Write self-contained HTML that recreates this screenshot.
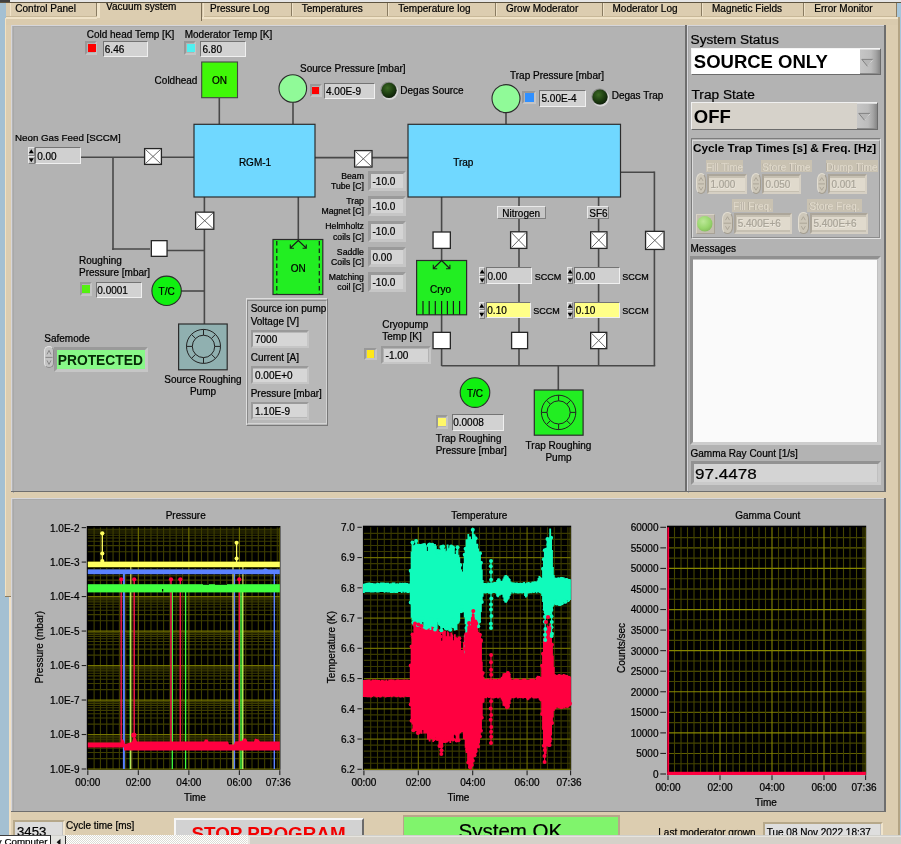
<!DOCTYPE html>
<html><head><meta charset="utf-8"><title>Vacuum system</title>
<style>
html,body{margin:0;padding:0;}
body{width:901px;height:844px;overflow:hidden;position:relative;background:#dccdb0;font-family:"Liberation Sans", sans-serif;}
#root{position:absolute;left:-6px;top:-6px;width:913px;height:856px;overflow:visible;filter:blur(0.4px);}
#in{left:6px;top:6px;width:901px;height:844px;overflow:visible;will-change:transform;}
#root div{position:absolute;}
#root span{position:absolute;white-space:nowrap;line-height:1;-webkit-text-stroke:0.22px;}
</style></head><body><div id="root"><div id="in">
<div style="left:-6px;top:-6px;width:913px;height:856px;background:#dccdb0;"></div>
<div style="left:-6px;top:1.5px;width:12px;height:16px;background:#a4c0d2;"></div>
<div style="left:-6px;top:17px;width:10.7px;height:580px;background:#a4c0d2;"></div>
<div style="left:-6px;top:597px;width:15px;height:238px;background:#a4c0d2;"></div>
<div style="left:4.7px;top:17.5px;width:1.8px;height:579px;background:#f2e2c2;"></div>
<div style="left:9px;top:597px;width:2px;height:238px;background:#f0e0c4;"></div>
<div style="left:4.7px;top:595.5px;width:6px;height:1.5px;background:#8c7c60;"></div>
<div style="left:897.3px;top:3px;width:9.7px;height:14.5px;background:#a6c6da;"></div>
<div style="left:896px;top:3px;width:1.4px;height:14.5px;background:#a89878;"></div>
<div style="left:899.8px;top:17.3px;width:7.2px;height:818px;background:#a6c6da;"></div>
<div style="left:898.2px;top:17.3px;width:1.6px;height:818px;background:#b4a484;"></div>
<div style="left:6px;top:3px;width:891px;height:14.5px;background:#dccdb0;"></div>
<div style="left:6px;top:17.3px;width:891.5px;height:1.7px;background:#f0e3c8;"></div>
<div style="left:6px;top:19px;width:891.5px;height:5.7px;background:#dacbae;"></div>
<div style="left:95.7px;top:3px;width:1.3px;height:14px;background:#8a7c62;"></div>
<div style="left:10px;top:3px;width:1px;height:14px;background:#efe2c8;"></div>
<span style="top:4px;font-size:10px;color:#000;left:15.3px;">Control Panel</span>
<div style="left:97px;top:1px;width:105px;height:19px;background:#dccdb0;"></div>
<div style="left:97px;top:1px;width:2.6px;height:17px;background:#f0e4ca;"></div>
<div style="left:200.5px;top:1px;width:1.5px;height:19.5px;background:#7a6c54;"></div>
<span style="top:2px;font-size:10px;color:#000;left:106px;">Vacuum system</span>
<div style="left:290.7px;top:3px;width:1.3px;height:14px;background:#8a7c62;"></div>
<div style="left:202.5px;top:3px;width:1px;height:14px;background:#efe2c8;"></div>
<span style="top:4px;font-size:10px;color:#000;left:210px;">Pressure Log</span>
<div style="left:386.7px;top:3px;width:1.3px;height:14px;background:#8a7c62;"></div>
<div style="left:292px;top:3px;width:1px;height:14px;background:#efe2c8;"></div>
<span style="top:4px;font-size:10px;color:#000;left:301.7px;">Temperatures</span>
<div style="left:494.7px;top:3px;width:1.3px;height:14px;background:#8a7c62;"></div>
<div style="left:388px;top:3px;width:1px;height:14px;background:#efe2c8;"></div>
<span style="top:4px;font-size:10px;color:#000;left:398.3px;">Temperature log</span>
<div style="left:601.7px;top:3px;width:1.3px;height:14px;background:#8a7c62;"></div>
<div style="left:496px;top:3px;width:1px;height:14px;background:#efe2c8;"></div>
<span style="top:4px;font-size:10px;color:#000;left:506px;">Grow Moderator</span>
<div style="left:700.7px;top:3px;width:1.3px;height:14px;background:#8a7c62;"></div>
<div style="left:603px;top:3px;width:1px;height:14px;background:#efe2c8;"></div>
<span style="top:4px;font-size:10px;color:#000;left:612.5px;">Moderator Log</span>
<div style="left:802.7px;top:3px;width:1.3px;height:14px;background:#8a7c62;"></div>
<div style="left:702px;top:3px;width:1px;height:14px;background:#efe2c8;"></div>
<span style="top:4px;font-size:10px;color:#000;left:712px;">Magnetic Fields</span>
<div style="left:895.7px;top:3px;width:1.3px;height:14px;background:#8a7c62;"></div>
<div style="left:804px;top:3px;width:1px;height:14px;background:#efe2c8;"></div>
<span style="top:4px;font-size:10px;color:#000;left:814.3px;">Error Monitor</span>
<div style="left:6px;top:16.3px;width:91px;height:1px;background:#c8b898;"></div>
<div style="left:203.5px;top:16.3px;width:692.5px;height:1px;background:#c8b898;"></div>
<div style="left:-6px;top:-6px;width:913px;height:8px;background:#e6e6e6;"></div>
<div style="left:-6px;top:1.9px;width:913px;height:1.4px;background:#5e5440;"></div>
<div style="left:-6px;top:-6px;width:16px;height:7.6px;background:#404040;"></div>
<div style="left:11.2px;top:24.7px;width:675.5px;height:467.8px;background:#b3b3b3;"></div>
<div style="left:11.2px;top:24.7px;width:675.5px;height:1.3px;background:#d6d6da;"></div>
<div style="left:11.2px;top:24.7px;width:1.3px;height:467.8px;background:#d6d6da;"></div>
<div style="left:12.5px;top:26.0px;width:674.2px;height:1px;background:#a9a9a9;"></div>
<div style="left:12.5px;top:26.0px;width:1px;height:466.5px;background:#a9a9a9;"></div>
<div style="left:11.2px;top:490.6px;width:675.5px;height:1.9px;background:#6e6e6e;"></div>
<div style="left:684.8000000000001px;top:24.7px;width:1.9px;height:467.8px;background:#6e6e6e;"></div>
<div style="left:686.7px;top:24.7px;width:199.1px;height:467.8px;background:#b3b3b3;"></div>
<div style="left:686.7px;top:24.7px;width:199.1px;height:1.3px;background:#d6d6da;"></div>
<div style="left:686.7px;top:24.7px;width:1.3px;height:467.8px;background:#d6d6da;"></div>
<div style="left:688.0px;top:26.0px;width:197.79999999999998px;height:1px;background:#a9a9a9;"></div>
<div style="left:688.0px;top:26.0px;width:1px;height:466.5px;background:#a9a9a9;"></div>
<div style="left:686.7px;top:490.6px;width:199.1px;height:1.9px;background:#6e6e6e;"></div>
<div style="left:883.9000000000001px;top:24.7px;width:1.9px;height:467.8px;background:#6e6e6e;"></div>
<div style="left:11.2px;top:498px;width:874.6px;height:314.4px;background:#b3b3b3;"></div>
<div style="left:11.2px;top:498px;width:874.6px;height:1.3px;background:#d6d6da;"></div>
<div style="left:11.2px;top:498px;width:1.3px;height:314.4px;background:#d6d6da;"></div>
<div style="left:12.5px;top:499.3px;width:873.3000000000001px;height:1px;background:#a9a9a9;"></div>
<div style="left:12.5px;top:499.3px;width:1px;height:313.09999999999997px;background:#a9a9a9;"></div>
<div style="left:11.2px;top:810.5px;width:874.6px;height:1.9px;background:#6e6e6e;"></div>
<div style="left:883.9000000000001px;top:498px;width:1.9px;height:314.4px;background:#6e6e6e;"></div>
<svg width="901" height="844" viewBox="0 0 901 844" style="position:absolute;left:0;top:0"><defs><radialGradient id="ledg" cx="0.4" cy="0.35" r="0.7"><stop offset="0" stop-color="#3c6a24"/><stop offset="0.6" stop-color="#1c3c10"/><stop offset="1" stop-color="#0c1c08"/></radialGradient><radialGradient id="ledon" cx="0.4" cy="0.35" r="0.7"><stop offset="0" stop-color="#bce898"/><stop offset="0.65" stop-color="#98d66c"/><stop offset="1" stop-color="#84bc5c"/></radialGradient></defs><line x1="81" y1="157.3" x2="194" y2="157.3" stroke="#484848" stroke-width="1.6"/><line x1="113" y1="157.3" x2="113" y2="250" stroke="#484848" stroke-width="1.6"/><line x1="112.2" y1="249" x2="150" y2="249" stroke="#484848" stroke-width="1.6"/><line x1="167" y1="250.5" x2="204.4" y2="250.5" stroke="#484848" stroke-width="1.6"/><line x1="204.4" y1="197" x2="204.4" y2="324" stroke="#484848" stroke-width="1.6"/><line x1="181" y1="291" x2="204.4" y2="291" stroke="#484848" stroke-width="1.6"/><line x1="219.3" y1="98" x2="219.3" y2="124" stroke="#484848" stroke-width="1.6"/><line x1="293" y1="101" x2="293" y2="124" stroke="#484848" stroke-width="1.6"/><line x1="298.3" y1="197" x2="298.3" y2="240" stroke="#484848" stroke-width="1.6"/><line x1="315" y1="157.6" x2="408" y2="157.6" stroke="#484848" stroke-width="1.6"/><line x1="506" y1="112" x2="506" y2="124" stroke="#484848" stroke-width="1.6"/><line x1="441.6" y1="197" x2="441.6" y2="366" stroke="#484848" stroke-width="1.6"/><line x1="519" y1="197" x2="519" y2="366" stroke="#484848" stroke-width="1.6"/><line x1="598.6" y1="197" x2="598.6" y2="366" stroke="#484848" stroke-width="1.6"/><line x1="620" y1="172.3" x2="654.4" y2="172.3" stroke="#484848" stroke-width="1.6"/><line x1="654.4" y1="171.5" x2="654.4" y2="366" stroke="#484848" stroke-width="1.6"/><line x1="441.6" y1="365.7" x2="655.2" y2="365.7" stroke="#484848" stroke-width="1.6"/><line x1="558.3" y1="365.7" x2="558.3" y2="390" stroke="#484848" stroke-width="1.6"/><rect x="194" y="124.3" width="121" height="72.7" fill="#70d8ff" stroke="#2c2c2c" stroke-width="1.2"/><rect x="408" y="124.3" width="212.5" height="72.7" fill="#70d8ff" stroke="#2c2c2c" stroke-width="1.2"/><rect x="201.7" y="62" width="35.8" height="35.7" fill="#40f808" stroke="#444" stroke-width="1.1"/><rect x="273" y="239.5" width="49.8" height="55" fill="#22ee22" stroke="#2c2c2c" stroke-width="1.2"/><path d="M276.8,241 V294 M319.3,241 V294" stroke="#1a1a1a" stroke-width="1.2" stroke-dasharray="4.5,3" fill="none"/><path d="M298.3,240.5 L291,247.5 M298.3,240.5 L305.6,247.5 M290.3,244.5 V248.2 H294 M306.3,244.5 V248.2 H302.6" stroke="#1a1a1a" stroke-width="1.1" fill="none"/><rect x="416.6" y="260.5" width="50" height="54.3" fill="#22ee22" stroke="#2c2c2c" stroke-width="1.2"/><path d="M441.6,260.5 L434,268 M441.6,260.5 L449.2,268 M433.3,264.8 V268.7 H437.2 M449.9,264.8 V268.7 H446" stroke="#1a1a1a" stroke-width="1.1" fill="none"/><path d="M423,301 V314.5 M429.2,301 V314.5 M435.3,301 V314.5 M441.6,301 V314.5 M447.4,301 V314.5 M453.4,301 V314.5 M459.6,301 V314.5 " stroke="#1a1a1a" stroke-width="1.2" fill="none"/><rect x="144.6" y="148.6" width="16.8" height="15.8" fill="#ffffff" stroke="#262626" stroke-width="1.3"/><path d="M145.4,149.4 L160.6,163.6 M160.6,149.4 L145.4,163.6" stroke="#585858" stroke-width="0.9" fill="none"/><rect x="195.6" y="212.14999999999998" width="18.2" height="17.099999999999998" fill="#ffffff" stroke="#262626" stroke-width="1.3"/><path d="M196.4,212.95 L212.99999999999997,228.44999999999996 M212.99999999999997,212.95 L196.4,228.44999999999996" stroke="#585858" stroke-width="0.9" fill="none"/><rect x="151.35" y="240.65" width="15.7" height="15.7" fill="#ffffff" stroke="#262626" stroke-width="1.3"/><rect x="354.6" y="150.60000000000002" width="17.4" height="16.4" fill="#ffffff" stroke="#262626" stroke-width="1.3"/><path d="M355.40000000000003,151.40000000000003 L371.2,166.20000000000002 M371.2,151.40000000000003 L355.40000000000003,166.20000000000002" stroke="#585858" stroke-width="0.9" fill="none"/><rect x="433.05" y="232.0" width="17.3" height="16.4" fill="#ffffff" stroke="#262626" stroke-width="1.3"/><rect x="510.6" y="231.79999999999998" width="16.2" height="16.599999999999998" fill="#ffffff" stroke="#262626" stroke-width="1.3"/><path d="M511.40000000000003,232.6 L526.0000000000001,247.59999999999997 M526.0000000000001,232.6 L511.40000000000003,247.59999999999997" stroke="#585858" stroke-width="0.9" fill="none"/><rect x="590.65" y="231.79999999999998" width="16.3" height="16.599999999999998" fill="#ffffff" stroke="#262626" stroke-width="1.3"/><path d="M591.4499999999999,232.6 L606.15,247.59999999999997 M606.15,232.6 L591.4499999999999,247.59999999999997" stroke="#585858" stroke-width="0.9" fill="none"/><rect x="645.55" y="231.35" width="18.5" height="18.099999999999998" fill="#ffffff" stroke="#262626" stroke-width="1.3"/><path d="M646.3499999999999,232.15 L663.25,248.64999999999998 M663.25,232.15 L646.3499999999999,248.64999999999998" stroke="#585858" stroke-width="0.9" fill="none"/><rect x="433.05" y="332.35" width="17.3" height="16.3" fill="#ffffff" stroke="#262626" stroke-width="1.3"/><rect x="511.6" y="332.35" width="16.0" height="16.3" fill="#ffffff" stroke="#262626" stroke-width="1.3"/><rect x="590.6500000000001" y="332.35" width="16.099999999999998" height="16.3" fill="#ffffff" stroke="#262626" stroke-width="1.3"/><path d="M591.45,333.15000000000003 L605.9500000000002,347.85 M605.9500000000002,333.15000000000003 L591.45,347.85" stroke="#585858" stroke-width="0.9" fill="none"/><circle cx="292.8" cy="88.5" r="13.8" fill="#90fa98" stroke="#2c2c2c" stroke-width="1.1"/><circle cx="506" cy="98.6" r="14" fill="#90fa98" stroke="#2c2c2c" stroke-width="1.1"/><circle cx="166.6" cy="290.8" r="14.7" fill="#10f010" stroke="#2c2c2c" stroke-width="1.1"/><circle cx="475" cy="392.6" r="14.8" fill="#10f010" stroke="#2c2c2c" stroke-width="1.1"/><rect x="178.6" y="324" width="48.6" height="45.8" fill="#90b0b0" stroke="#2c2c2c" stroke-width="1.2"/><circle cx="203.5" cy="346.4" r="17" fill="none" stroke="#222" stroke-width="1"/><circle cx="203.5" cy="346.4" r="11.2" fill="none" stroke="#222" stroke-width="1"/><path d="M214.70,346.40 L220.50,346.40 M211.42,354.32 L215.52,358.42 M203.50,357.60 L203.50,363.40 M195.58,354.32 L191.48,358.42 M192.30,346.40 L186.50,346.40 M195.58,338.48 L191.48,334.38 M203.50,335.20 L203.50,329.40 M211.42,338.48 L215.52,334.38 " stroke="#222" stroke-width="1" fill="none"/><rect x="534.3" y="390" width="48.8" height="45.2" fill="#22ee22" stroke="#2c2c2c" stroke-width="1.2"/><circle cx="558.6" cy="412.4" r="17.2" fill="none" stroke="#222" stroke-width="1"/><circle cx="558.6" cy="412.4" r="11.6" fill="none" stroke="#222" stroke-width="1"/><path d="M570.20,412.40 L575.80,412.40 M566.80,420.60 L570.76,424.56 M558.60,424.00 L558.60,429.60 M550.40,420.60 L546.44,424.56 M547.00,412.40 L541.40,412.40 M550.40,404.20 L546.44,400.24 M558.60,400.80 L558.60,395.20 M566.80,404.20 L570.76,400.24 " stroke="#222" stroke-width="1" fill="none"/><circle cx="389.6" cy="91.1" r="8.6" fill="#d8d8d8"/><circle cx="388.6" cy="89.89999999999999" r="8.2" fill="#8a8a8a"/><circle cx="389" cy="90.3" r="7.6" fill="url(#ledg)"/><circle cx="600.6" cy="97.8" r="8.6" fill="#d8d8d8"/><circle cx="599.6" cy="96.6" r="8.2" fill="#8a8a8a"/><circle cx="600" cy="97" r="7.6" fill="url(#ledg)"/></svg>
<span style="top:158px;font-size:10px;color:#000;left:255px;transform:translateX(-50%);">RGM-1</span>
<span style="top:158px;font-size:10px;color:#000;left:463.3px;transform:translateX(-50%);">Trap</span>
<span style="top:76px;font-size:10px;color:#000;left:219.5px;transform:translateX(-50%);">ON</span>
<span style="top:264px;font-size:10px;color:#000;left:298.3px;transform:translateX(-50%);">ON</span>
<span style="top:285px;font-size:10px;color:#000;left:440.5px;transform:translateX(-50%);">Cryo</span>
<span style="top:287px;font-size:10px;color:#000;left:166.6px;transform:translateX(-50%);">T/C</span>
<span style="top:389px;font-size:10px;color:#000;left:475px;transform:translateX(-50%);">T/C</span>
<span style="top:76px;font-size:10px;color:#000;right:703.6px;">Coldhead</span>
<span style="top:30px;font-size:10px;color:#000;left:86.7px;">Cold head Temp [K]</span>
<span style="top:30px;font-size:10px;color:#000;left:184.7px;">Moderator Temp [K]</span>
<span style="top:64px;font-size:10px;color:#000;left:300px;">Source Pressure [mbar]</span>
<span style="top:86px;font-size:10px;color:#000;left:400.3px;">Degas Source</span>
<span style="top:71px;font-size:10px;color:#000;left:510px;">Trap Pressure [mbar]</span>
<span style="top:91px;font-size:10px;color:#000;left:611.7px;">Degas Trap</span>
<span style="top:133px;font-size:9.75px;color:#000;left:15px;">Neon Gas Feed [SCCM]</span>
<span style="top:256px;font-size:10px;color:#000;left:79px;">Roughing</span>
<span style="top:268px;font-size:10px;color:#000;left:79px;">Pressure [mbar]</span>
<span style="top:334px;font-size:10px;color:#000;left:44.3px;">Safemode</span>
<span style="top:375px;font-size:10px;color:#000;left:203px;transform:translateX(-50%);">Source Roughing</span>
<span style="top:387px;font-size:10px;color:#000;left:203px;transform:translateX(-50%);">Pump</span>
<span style="top:441px;font-size:10px;color:#000;left:558.5px;transform:translateX(-50%);">Trap Roughing</span>
<span style="top:453px;font-size:10px;color:#000;left:558.5px;transform:translateX(-50%);">Pump</span>
<span style="top:434px;font-size:10px;color:#000;left:435.7px;">Trap Roughing</span>
<span style="top:446px;font-size:10px;color:#000;left:435.7px;">Pressure [mbar]</span>
<span style="top:320px;font-size:10px;color:#000;left:382.3px;">Cryopump</span>
<span style="top:332px;font-size:10px;color:#000;left:382.3px;">Temp [K]</span>
<span style="top:172px;font-size:8.7px;color:#000;right:537.1px;">Beam</span>
<span style="top:182px;font-size:8.7px;color:#000;right:537.1px;">Tube [C]</span>
<div style="left:367.5px;top:170.6px;width:38px;height:20.6px;background:transparent;box-sizing:border-box;border:3px solid;border-color:#9a9a9a #c6c6c6 #c6c6c6 #9a9a9a;"></div>
<div style="left:370.5px;top:173.6px;width:32px;height:14.600000000000001px;background:#d4d4d4;"></div>
<span style="top:177px;font-size:10px;color:#000;left:372.5px;">-10.0</span>
<span style="top:197px;font-size:8.7px;color:#000;right:537.1px;">Trap</span>
<span style="top:207px;font-size:8.7px;color:#000;right:537.1px;">Magnet [C]</span>
<div style="left:367.5px;top:195.9px;width:38px;height:20.6px;background:transparent;box-sizing:border-box;border:3px solid;border-color:#9a9a9a #c6c6c6 #c6c6c6 #9a9a9a;"></div>
<div style="left:370.5px;top:198.9px;width:32px;height:14.600000000000001px;background:#d4d4d4;"></div>
<span style="top:202px;font-size:10px;color:#000;left:372.5px;">-10.0</span>
<span style="top:222px;font-size:8.7px;color:#000;right:537.1px;">Helmholtz</span>
<span style="top:233px;font-size:8.7px;color:#000;right:537.1px;">coils [C]</span>
<div style="left:367.5px;top:221.2px;width:38px;height:20.6px;background:transparent;box-sizing:border-box;border:3px solid;border-color:#9a9a9a #c6c6c6 #c6c6c6 #9a9a9a;"></div>
<div style="left:370.5px;top:224.2px;width:32px;height:14.600000000000001px;background:#d4d4d4;"></div>
<span style="top:227px;font-size:10px;color:#000;left:372.5px;">-10.0</span>
<span style="top:248px;font-size:8.7px;color:#000;right:537.1px;">Saddle</span>
<span style="top:258px;font-size:8.7px;color:#000;right:537.1px;">Coils [C]</span>
<div style="left:367.5px;top:246.5px;width:38px;height:20.6px;background:transparent;box-sizing:border-box;border:3px solid;border-color:#9a9a9a #c6c6c6 #c6c6c6 #9a9a9a;"></div>
<div style="left:370.5px;top:249.5px;width:32px;height:14.600000000000001px;background:#d4d4d4;"></div>
<span style="top:253px;font-size:10px;color:#000;left:372.5px;">0.00</span>
<span style="top:273px;font-size:8.7px;color:#000;right:537.1px;">Matching</span>
<span style="top:283px;font-size:8.7px;color:#000;right:537.1px;">coil [C]</span>
<div style="left:367.5px;top:271.8px;width:38px;height:20.6px;background:transparent;box-sizing:border-box;border:3px solid;border-color:#9a9a9a #c6c6c6 #c6c6c6 #9a9a9a;"></div>
<div style="left:370.5px;top:274.8px;width:32px;height:14.600000000000001px;background:#d4d4d4;"></div>
<span style="top:278px;font-size:10px;color:#000;left:372.5px;">-10.0</span>
<div style="left:85.3px;top:40.8px;width:12.2px;height:13.8px;background:transparent;box-sizing:border-box;border:2px solid;border-color:#989898 #c4c4c4 #c4c4c4 #989898;"></div>
<div style="left:88.3px;top:44px;width:8px;height:8px;background:#ff0000;"></div>
<div style="left:102.7px;top:40.8px;width:45.5px;height:16px;background:#d2d2d2;box-sizing:border-box;border:1.4px solid;border-color:#747474 #f0f0f0 #f0f0f0 #747474;"></div>
<span style="top:45px;font-size:10px;color:#000;left:104.8px;">6.46</span>
<div style="left:183.5px;top:40.8px;width:12.2px;height:13.8px;background:transparent;box-sizing:border-box;border:2px solid;border-color:#989898 #c4c4c4 #c4c4c4 #989898;"></div>
<div style="left:186.6px;top:44px;width:8px;height:8px;background:#50f0f0;"></div>
<div style="left:200.3px;top:40.8px;width:45.7px;height:16px;background:#d2d2d2;box-sizing:border-box;border:1.4px solid;border-color:#747474 #f0f0f0 #f0f0f0 #747474;"></div>
<span style="top:45px;font-size:10px;color:#000;left:202.5px;">6.80</span>
<div style="left:309.5px;top:84.3px;width:12px;height:12.5px;background:transparent;box-sizing:border-box;border:2px solid;border-color:#989898 #c4c4c4 #c4c4c4 #989898;"></div>
<div style="left:312.1px;top:86.89999999999999px;width:6.8px;height:7.3px;background:#ff0000;"></div>
<div style="left:324.3px;top:82.6px;width:50.3px;height:16.8px;background:#d2d2d2;box-sizing:border-box;border:1.4px solid;border-color:#747474 #f0f0f0 #f0f0f0 #747474;"></div>
<span style="top:87px;font-size:10px;color:#000;left:326px;">4.00E-9</span>
<div style="left:521.8px;top:91px;width:14px;height:13.4px;background:transparent;box-sizing:border-box;border:2px solid;border-color:#989898 #c4c4c4 #c4c4c4 #989898;"></div>
<div style="left:525.4px;top:93.3px;width:9px;height:9px;background:#3090ff;"></div>
<div style="left:539.4px;top:89.8px;width:46.4px;height:17px;background:#d2d2d2;box-sizing:border-box;border:1.4px solid;border-color:#747474 #f0f0f0 #f0f0f0 #747474;"></div>
<span style="top:94px;font-size:10px;color:#000;left:541.5px;">5.00E-4</span>
<div style="left:79.8px;top:282px;width:12.6px;height:13.6px;background:transparent;box-sizing:border-box;border:2px solid;border-color:#989898 #c4c4c4 #c4c4c4 #989898;"></div>
<div style="left:81.8px;top:284.7px;width:8px;height:8px;background:#54f010;"></div>
<div style="left:96.2px;top:282.2px;width:46px;height:16.2px;background:#d2d2d2;box-sizing:border-box;border:1.4px solid;border-color:#747474 #f0f0f0 #f0f0f0 #747474;"></div>
<span style="top:286px;font-size:10px;color:#000;left:97.3px;">0.0001</span>
<div style="left:435.5px;top:415.2px;width:12.8px;height:13.4px;background:transparent;box-sizing:border-box;border:2px solid;border-color:#989898 #c4c4c4 #c4c4c4 #989898;"></div>
<div style="left:438.1px;top:417.8px;width:7.6000000000000005px;height:8.2px;background:#fff868;"></div>
<div style="left:451.8px;top:414.2px;width:52.5px;height:16.6px;background:#d2d2d2;box-sizing:border-box;border:1.4px solid;border-color:#747474 #f0f0f0 #f0f0f0 #747474;"></div>
<span style="top:418px;font-size:10px;color:#000;left:453.2px;">0.0008</span>
<div style="left:364.3px;top:347.6px;width:12.6px;height:12.6px;background:transparent;box-sizing:border-box;border:2px solid;border-color:#989898 #c4c4c4 #c4c4c4 #989898;"></div>
<div style="left:366.90000000000003px;top:350.20000000000005px;width:7.3999999999999995px;height:7.3999999999999995px;background:#ffe818;"></div>
<div style="left:381px;top:346px;width:49.7px;height:18.4px;background:transparent;box-sizing:border-box;border:2.5px solid;border-color:#9a9a9a #c6c6c6 #c6c6c6 #9a9a9a;"></div>
<div style="left:383.5px;top:348.5px;width:44.7px;height:13.399999999999999px;background:#d4d4d4;"></div>
<span style="top:351px;font-size:10px;color:#000;left:385.6px;">-1.00</span>
<div style="left:28px;top:147.2px;width:6.6px;height:8.5px;background:#c4c4c4;box-sizing:border-box;border:1px solid;border-color:#e8e8e8 #808080 #808080 #e8e8e8;"></div>
<div style="left:28px;top:155.7px;width:6.6px;height:8.5px;background:#c4c4c4;box-sizing:border-box;border:1px solid;border-color:#e8e8e8 #808080 #808080 #e8e8e8;"></div>
<div style="left:35.2px;top:147.4px;width:45.4px;height:16.8px;background:#d0d0d0;box-sizing:border-box;border:1.4px solid;border-color:#747474 #f0f0f0 #f0f0f0 #747474;"></div>
<span style="top:152px;font-size:10px;color:#000;left:37.2px;">0.00</span>
<div style="left:479.3px;top:267.4px;width:5.8px;height:8.5px;background:#c4c4c4;box-sizing:border-box;border:1px solid;border-color:#e8e8e8 #808080 #808080 #e8e8e8;"></div>
<div style="left:479.3px;top:275.9px;width:5.8px;height:8.5px;background:#c4c4c4;box-sizing:border-box;border:1px solid;border-color:#e8e8e8 #808080 #808080 #e8e8e8;"></div>
<div style="left:486px;top:267.3px;width:45.7px;height:17px;background:#d0d0d0;box-sizing:border-box;border:1.4px solid;border-color:#747474 #f0f0f0 #f0f0f0 #747474;"></div>
<span style="top:272px;font-size:10px;color:#000;left:487.5px;">0.00</span>
<span style="top:273px;font-size:9px;color:#000;left:534.7px;">SCCM</span>
<div style="left:567.2px;top:267.4px;width:5.8px;height:8.5px;background:#c4c4c4;box-sizing:border-box;border:1px solid;border-color:#e8e8e8 #808080 #808080 #e8e8e8;"></div>
<div style="left:567.2px;top:275.9px;width:5.8px;height:8.5px;background:#c4c4c4;box-sizing:border-box;border:1px solid;border-color:#e8e8e8 #808080 #808080 #e8e8e8;"></div>
<div style="left:574.3px;top:267.3px;width:45.7px;height:17px;background:#d0d0d0;box-sizing:border-box;border:1.4px solid;border-color:#747474 #f0f0f0 #f0f0f0 #747474;"></div>
<span style="top:272px;font-size:10px;color:#000;left:575.8px;">0.00</span>
<span style="top:273px;font-size:9px;color:#000;left:622.3px;">SCCM</span>
<div style="left:478.8px;top:301.8px;width:5.8px;height:8.5px;background:#c4c4c4;box-sizing:border-box;border:1px solid;border-color:#e8e8e8 #808080 #808080 #e8e8e8;"></div>
<div style="left:478.8px;top:310.3px;width:5.8px;height:8.5px;background:#c4c4c4;box-sizing:border-box;border:1px solid;border-color:#e8e8e8 #808080 #808080 #e8e8e8;"></div>
<div style="left:485.8px;top:301.7px;width:45.3px;height:16.8px;background:#ffff88;box-sizing:border-box;border:1.4px solid;border-color:#747474 #f0f0f0 #f0f0f0 #747474;"></div>
<span style="top:306px;font-size:10px;color:#000;left:487.3px;">0.10</span>
<span style="top:307px;font-size:9px;color:#000;left:533.3px;">SCCM</span>
<div style="left:567.2px;top:301.8px;width:5.8px;height:8.5px;background:#c4c4c4;box-sizing:border-box;border:1px solid;border-color:#e8e8e8 #808080 #808080 #e8e8e8;"></div>
<div style="left:567.2px;top:310.3px;width:5.8px;height:8.5px;background:#c4c4c4;box-sizing:border-box;border:1px solid;border-color:#e8e8e8 #808080 #808080 #e8e8e8;"></div>
<div style="left:574.3px;top:301.7px;width:45.3px;height:16.8px;background:#ffff88;box-sizing:border-box;border:1.4px solid;border-color:#747474 #f0f0f0 #f0f0f0 #747474;"></div>
<span style="top:306px;font-size:10px;color:#000;left:575.8px;">0.10</span>
<span style="top:307px;font-size:9px;color:#000;left:622.3px;">SCCM</span>
<svg width="901" height="844" viewBox="0 0 901 844" style="position:absolute;left:0;top:0"><path d="M28.8,153.2 L33.8,153.2 L31.3,149.2 Z" fill="#000"/><path d="M28.8,158.2 L33.8,158.2 L31.3,162.2 Z" fill="#000"/><path d="M479.7,273.4 L484.7,273.4 L482.2,269.4 Z" fill="#000"/><path d="M479.7,278.4 L484.7,278.4 L482.2,282.4 Z" fill="#000"/><path d="M567.6,273.4 L572.6,273.4 L570.1,269.4 Z" fill="#000"/><path d="M567.6,278.4 L572.6,278.4 L570.1,282.4 Z" fill="#000"/><path d="M479.2,307.8 L484.2,307.8 L481.7,303.8 Z" fill="#000"/><path d="M479.2,312.8 L484.2,312.8 L481.7,316.8 Z" fill="#000"/><path d="M567.6,307.8 L572.6,307.8 L570.1,303.8 Z" fill="#000"/><path d="M567.6,312.8 L572.6,312.8 L570.1,316.8 Z" fill="#000"/></svg>
<div style="left:496.6px;top:205.8px;width:49px;height:13.4px;background:#c6c6c6;box-sizing:border-box;border:1px solid;border-color:#eaeaea #808080 #808080 #eaeaea;"></div>
<span style="top:209px;font-size:10px;color:#000;left:521.2px;transform:translateX(-50%);">Nitrogen</span>
<div style="left:587.3px;top:205.8px;width:22px;height:13.4px;background:#c6c6c6;box-sizing:border-box;border:1px solid;border-color:#eaeaea #808080 #808080 #eaeaea;"></div>
<span style="top:209px;font-size:10px;color:#000;left:598.4px;transform:translateX(-50%);">SF6</span>
<div style="left:245.6px;top:298.4px;width:82.8px;height:127.4px;background:#b8b8b8;box-sizing:border-box;border:1.4px solid;border-color:#dedede #787878 #787878 #dedede;"></div>
<div style="left:247px;top:299.8px;width:80px;height:124.6px;background:transparent;box-sizing:border-box;border:1px solid;border-color:#8a8a8a #d4d4d4 #d4d4d4 #8a8a8a;"></div>
<span style="top:304px;font-size:10px;color:#000;left:250.7px;">Source ion pump</span>
<span style="top:317px;font-size:10px;color:#000;left:250.7px;">Voltage [V]</span>
<div style="left:250.7px;top:330px;width:58.7px;height:18.4px;background:transparent;box-sizing:border-box;border:2.6px solid;border-color:#9a9a9a #c6c6c6 #c6c6c6 #9a9a9a;"></div>
<div style="left:253.29999999999998px;top:332.6px;width:53.5px;height:13.2px;background:#d6d6d6;"></div>
<span style="top:335px;font-size:10px;color:#000;left:255px;">7000</span>
<span style="top:353px;font-size:10px;color:#000;left:250.7px;">Current [A]</span>
<div style="left:250.7px;top:366px;width:58.7px;height:18.4px;background:transparent;box-sizing:border-box;border:2.6px solid;border-color:#9a9a9a #c6c6c6 #c6c6c6 #9a9a9a;"></div>
<div style="left:253.29999999999998px;top:368.6px;width:53.5px;height:13.2px;background:#d6d6d6;"></div>
<span style="top:371px;font-size:10px;color:#000;left:255px;">0.00E+0</span>
<span style="top:389px;font-size:10px;color:#000;left:250.7px;">Pressure [mbar]</span>
<div style="left:250.7px;top:401.7px;width:58.7px;height:18.4px;background:transparent;box-sizing:border-box;border:2.6px solid;border-color:#9a9a9a #c6c6c6 #c6c6c6 #9a9a9a;"></div>
<div style="left:253.29999999999998px;top:404.3px;width:53.5px;height:13.2px;background:#d6d6d6;"></div>
<span style="top:407px;font-size:10px;color:#000;left:255px;">1.10E-9</span>
<div style="left:43.8px;top:346.2px;width:10.4px;height:22.2px;background:#c4c4c4;border-radius:5px;box-sizing:border-box;border:1px solid;border-color:#e4e4e4 #8a8a8a #8a8a8a #e4e4e4;"></div>
<div style="left:54.2px;top:346.8px;width:94.3px;height:25.4px;background:transparent;box-sizing:border-box;border:3.2px solid;border-color:#9a9a9a #c6c6c6 #c6c6c6 #9a9a9a;"></div>
<div style="left:57.400000000000006px;top:350.0px;width:87.89999999999999px;height:19.0px;background:#88f888;"></div>
<span style="top:354px;font-size:13.8px;color:#062a06;font-weight:700;-webkit-text-stroke:0;left:57.8px;">PROTECTED</span>
<svg width="901" height="844" viewBox="0 0 901 844" style="position:absolute;left:0;top:0"><path d="M47,354.4 L49,350.4 L51,354.4 M47,360.4 L49,364.4 L51,360.4 M45.5,357.4 H52.5" stroke="#808080" stroke-width="0.9" fill="none"/></svg>
<span style="top:33px;font-size:13.7px;color:#000;left:690.5px;">System Status</span>
<div style="left:690.5px;top:47.7px;width:190px;height:27px;background:#ffffff;box-sizing:border-box;border:1.3px solid;border-color:#f4f4f4 #6c6c6c #6c6c6c #f4f4f4;"></div>
<div style="left:859.8px;top:48.6px;width:20px;height:25.2px;background:#c2c2c2;background:linear-gradient(90deg,#c6c6c6 0%,#bcbcbc 55%,#a4a4a4 80%,#868686 100%);box-sizing:border-box;border-top:1px solid #dadada;border-bottom:1px solid #8a8a8a;"></div>
<span style="top:53px;font-size:18.5px;color:#000;font-weight:700;-webkit-text-stroke:0;left:693.8px;">SOURCE ONLY</span>
<span style="top:88px;font-size:13.7px;color:#000;left:691.5px;">Trap State</span>
<div style="left:690.5px;top:101.7px;width:187.5px;height:28px;background:#d6d2ca;box-sizing:border-box;border:1.3px solid;border-color:#f0f0f0 #6c6c6c #6c6c6c #f0f0f0;"></div>
<div style="left:857px;top:102.6px;width:20.4px;height:26.4px;background:#c2c2c2;background:linear-gradient(90deg,#c6c6c6 0%,#bcbcbc 55%,#a4a4a4 80%,#868686 100%);box-sizing:border-box;border-top:1px solid #dadada;border-bottom:1px solid #8a8a8a;"></div>
<span style="top:108px;font-size:18.5px;color:#000;font-weight:700;-webkit-text-stroke:0;left:693.8px;">OFF</span>
<div style="left:691px;top:138.4px;width:190.2px;height:100.6px;background:#b6b6b6;box-sizing:border-box;border:1.3px solid;border-color:#7c7c7c #e2e2e2 #e2e2e2 #7c7c7c;"></div>
<div style="left:692.3px;top:139.7px;width:187.6px;height:98px;background:transparent;box-sizing:border-box;border:1px solid;border-color:#dcdcdc #8c8c8c #8c8c8c #dcdcdc;"></div>
<span style="top:142px;font-size:11.75px;color:#000;font-weight:700;-webkit-text-stroke:0;left:693px;">Cycle Trap Times [s] &amp; Freq. [Hz]</span>
<div style="left:705.5px;top:159.7px;width:37.5px;height:12.5px;background:#c9c2b2;"></div>
<span style="top:163px;font-size:10px;color:#e2dbcc;left:724.25px;transform:translateX(-50%);text-shadow:-0.5px -0.5px 0 #97928a;">Fill Time</span>
<div style="left:761px;top:159.7px;width:50.5px;height:12.5px;background:#c9c2b2;"></div>
<span style="top:163px;font-size:10px;color:#e2dbcc;left:786.25px;transform:translateX(-50%);text-shadow:-0.5px -0.5px 0 #97928a;">Store Time</span>
<div style="left:826px;top:159.7px;width:51.5px;height:12.5px;background:#c9c2b2;"></div>
<span style="top:163px;font-size:10px;color:#e2dbcc;left:851.75px;transform:translateX(-50%);text-shadow:-0.5px -0.5px 0 #97928a;">Dump Time</span>
<div style="left:696px;top:173.0px;width:10px;height:21.400000000000002px;background:#cdc7b9;border-radius:5px/7px;box-sizing:border-box;border:1px solid;border-color:#e2ddd1 #a39d90 #a39d90 #e2ddd1;"></div>
<div style="left:706.6px;top:173.6px;width:40.4px;height:20.6px;background:#c6c0b2;box-sizing:border-box;border:2px solid;border-color:#aca69a #d6d0c4 #d6d0c4 #aca69a;"></div>
<div style="left:709.4px;top:178.0px;width:35.4px;height:12.8px;background:#e0dacd;"></div>
<span style="top:180px;font-size:10px;color:#a9a498;left:710.4px;text-shadow:0.5px 0.5px 0 #ece8de;">1.000</span>
<div style="left:751px;top:173.0px;width:10px;height:21.400000000000002px;background:#cdc7b9;border-radius:5px/7px;box-sizing:border-box;border:1px solid;border-color:#e2ddd1 #a39d90 #a39d90 #e2ddd1;"></div>
<div style="left:761.6px;top:173.6px;width:39.9px;height:20.6px;background:#c6c0b2;box-sizing:border-box;border:2px solid;border-color:#aca69a #d6d0c4 #d6d0c4 #aca69a;"></div>
<div style="left:764.4px;top:178.0px;width:34.9px;height:12.8px;background:#e0dacd;"></div>
<span style="top:180px;font-size:10px;color:#a9a498;left:765.4px;text-shadow:0.5px 0.5px 0 #ece8de;">0.050</span>
<div style="left:816.5px;top:173.0px;width:10.5px;height:21.400000000000002px;background:#cdc7b9;border-radius:5px/7px;box-sizing:border-box;border:1px solid;border-color:#e2ddd1 #a39d90 #a39d90 #e2ddd1;"></div>
<div style="left:827.6px;top:173.6px;width:39.9px;height:20.6px;background:#c6c0b2;box-sizing:border-box;border:2px solid;border-color:#aca69a #d6d0c4 #d6d0c4 #aca69a;"></div>
<div style="left:830.4px;top:178.0px;width:34.9px;height:12.8px;background:#e0dacd;"></div>
<span style="top:180px;font-size:10px;color:#a9a498;left:831.4px;text-shadow:0.5px 0.5px 0 #ece8de;">0.001</span>
<div style="left:731.5px;top:199px;width:41.5px;height:13px;background:#c9c2b2;"></div>
<span style="top:202px;font-size:10px;color:#e2dbcc;left:752.25px;transform:translateX(-50%);text-shadow:-0.5px -0.5px 0 #97928a;">Fill Freq.</span>
<div style="left:807px;top:199px;width:54.5px;height:13px;background:#c9c2b2;"></div>
<span style="top:202px;font-size:10px;color:#e2dbcc;left:834.25px;transform:translateX(-50%);text-shadow:-0.5px -0.5px 0 #97928a;">Store Freq.</span>
<div style="left:721.7px;top:212.1px;width:11.599999999999909px;height:21.8px;background:#cdc7b9;border-radius:5px/7px;box-sizing:border-box;border:1px solid;border-color:#e2ddd1 #a39d90 #a39d90 #e2ddd1;"></div>
<div style="left:733.9px;top:212.7px;width:58.1px;height:21px;background:#c6c0b2;box-sizing:border-box;border:2px solid;border-color:#aca69a #d6d0c4 #d6d0c4 #aca69a;"></div>
<div style="left:736.6999999999999px;top:217.1px;width:53.1px;height:13.2px;background:#e0dacd;"></div>
<span style="top:219px;font-size:10px;color:#a9a498;left:737.6999999999999px;text-shadow:0.5px 0.5px 0 #ece8de;">5.400E+6</span>
<div style="left:797.7px;top:212.1px;width:11.299999999999955px;height:21.8px;background:#cdc7b9;border-radius:5px/7px;box-sizing:border-box;border:1px solid;border-color:#e2ddd1 #a39d90 #a39d90 #e2ddd1;"></div>
<div style="left:809.6px;top:212.7px;width:58.9px;height:21px;background:#c6c0b2;box-sizing:border-box;border:2px solid;border-color:#aca69a #d6d0c4 #d6d0c4 #aca69a;"></div>
<div style="left:812.4px;top:217.1px;width:53.9px;height:13.2px;background:#e0dacd;"></div>
<span style="top:219px;font-size:10px;color:#a9a498;left:813.4px;text-shadow:0.5px 0.5px 0 #ece8de;">5.400E+6</span>
<div style="left:695.5px;top:213.7px;width:19.2px;height:20px;background:#c4beb0;box-sizing:border-box;border:1px solid;border-color:#d8d2c6 #a8a296 #a8a296 #d8d2c6;"></div>
<svg width="901" height="844" viewBox="0 0 901 844" style="position:absolute;left:0;top:0"><path d="M861.8,59.4 H873.2 L867.5,66.4 Z" fill="#b6b6b6" stroke="#7c7c7c" stroke-width="0.9"/><path d="M873.2,59.4 L867.5,66.4" stroke="#e0e0e0" stroke-width="0.9"/><path d="M858.8,113.4 H870.4 L864.6,120.4 Z" fill="#b6b6b6" stroke="#7c7c7c" stroke-width="0.9"/><path d="M870.4,113.4 L864.6,120.4" stroke="#e0e0e0" stroke-width="0.9"/><path d="M699.0,180.9 L701.0,177.6 L703.0,180.9 M699.0,186.9 L701.0,190.2 L703.0,186.9 M698,183.9 H704" stroke="#a8a294" stroke-width="0.9" fill="none"/><path d="M754.0,180.9 L756.0,177.6 L758.0,180.9 M754.0,186.9 L756.0,190.2 L758.0,186.9 M753,183.9 H759" stroke="#a8a294" stroke-width="0.9" fill="none"/><path d="M819.75,180.9 L821.75,177.6 L823.75,180.9 M819.75,186.9 L821.75,190.2 L823.75,186.9 M818.5,183.9 H825" stroke="#a8a294" stroke-width="0.9" fill="none"/><path d="M725.5,220.2 L727.5,216.7 L729.5,220.2 M725.5,226.2 L727.5,229.7 L729.5,226.2 M723.7,223.2 H731.3" stroke="#a8a294" stroke-width="0.9" fill="none"/><path d="M801.35,220.2 L803.35,216.7 L805.35,220.2 M801.35,226.2 L803.35,229.7 L805.35,226.2 M799.7,223.2 H807" stroke="#a8a294" stroke-width="0.9" fill="none"/><circle cx="704.8" cy="223.7" r="7.7" fill="url(#ledon)"/></svg>
<span style="top:244px;font-size:10px;color:#000;left:690.5px;">Messages</span>
<div style="left:689.6px;top:256.2px;width:191.6px;height:189px;background:#c0c0c0;box-sizing:border-box;border-style:solid;border-width:3.5px 3.8px 3.4px 3.8px;border-color:#909090 #cdcdcd #cdcdcd #909090;"></div>
<div style="left:693.4px;top:259.7px;width:183.8px;height:182px;background:#fafafa;"></div>
<span style="top:449px;font-size:10px;color:#000;left:690.5px;">Gamma Ray Count [1/s]</span>
<div style="left:691px;top:460.5px;width:190px;height:24.8px;background:#c0c0c0;box-sizing:border-box;border:3px solid;border-color:#929292 #cacaca #cacaca #929292;"></div>
<div style="left:694px;top:464px;width:183px;height:18px;background:#d4d4d4;"></div>
<span style="top:466px;font-size:15.5px;color:#000;left:694.6px;transform-origin:0 50%;transform:scaleX(1.1);">97.4478</span>
<span style="top:511px;font-size:10px;color:#000;left:185.7px;transform:translateX(-50%);">Pressure</span>
<span style="top:524px;font-size:10px;color:#000;right:821.5px;">1.0E-2</span>
<span style="top:558px;font-size:10px;color:#000;right:821.5px;">1.0E-3</span>
<span style="top:592px;font-size:10px;color:#000;right:821.5px;">1.0E-4</span>
<span style="top:627px;font-size:10px;color:#000;right:821.5px;">1.0E-5</span>
<span style="top:661px;font-size:10px;color:#000;right:821.5px;">1.0E-6</span>
<span style="top:696px;font-size:10px;color:#000;right:821.5px;">1.0E-7</span>
<span style="top:730px;font-size:10px;color:#000;right:821.5px;">1.0E-8</span>
<span style="top:765px;font-size:10px;color:#000;right:821.5px;">1.0E-9</span>
<span style="top:778px;font-size:10px;color:#000;left:87.8px;transform:translateX(-50%);">00:00</span>
<span style="top:778px;font-size:10px;color:#000;left:138.32631578947368px;transform:translateX(-50%);">02:00</span>
<span style="top:778px;font-size:10px;color:#000;left:188.85263157894735px;transform:translateX(-50%);">04:00</span>
<span style="top:778px;font-size:10px;color:#000;left:239.37894736842105px;transform:translateX(-50%);">06:00</span>
<span style="top:778px;font-size:10px;color:#000;left:278.19999999999993px;transform:translateX(-50%);">07:36</span>
<span style="top:793px;font-size:10px;color:#000;left:195px;transform:translateX(-50%);">Time</span>
<span style="left:40.3px;top:646.7px;font-size:10px;transform:translate(-50%,-50%) rotate(-90deg);">Pressure (mbar)</span>
<span style="top:511px;font-size:10px;color:#000;left:479.3px;transform:translateX(-50%);">Temperature</span>
<span style="top:523px;font-size:10px;color:#000;right:546.1px;">7.0</span>
<span style="top:553px;font-size:10px;color:#000;right:546.1px;">6.9</span>
<span style="top:584px;font-size:10px;color:#000;right:546.1px;">6.8</span>
<span style="top:614px;font-size:10px;color:#000;right:546.1px;">6.7</span>
<span style="top:644px;font-size:10px;color:#000;right:546.1px;">6.6</span>
<span style="top:674px;font-size:10px;color:#000;right:546.1px;">6.5</span>
<span style="top:705px;font-size:10px;color:#000;right:546.1px;">6.4</span>
<span style="top:735px;font-size:10px;color:#000;right:546.1px;">6.3</span>
<span style="top:765px;font-size:10px;color:#000;right:546.1px;">6.2</span>
<span style="top:778px;font-size:10px;color:#000;left:363.9px;transform:translateX(-50%);">00:00</span>
<span style="top:778px;font-size:10px;color:#000;left:418.29473684210524px;transform:translateX(-50%);">02:00</span>
<span style="top:778px;font-size:10px;color:#000;left:472.6894736842105px;transform:translateX(-50%);">04:00</span>
<span style="top:778px;font-size:10px;color:#000;left:527.0842105263158px;transform:translateX(-50%);">06:00</span>
<span style="top:778px;font-size:10px;color:#000;left:569.0px;transform:translateX(-50%);">07:36</span>
<span style="top:793px;font-size:10px;color:#000;left:458.5px;transform:translateX(-50%);">Time</span>
<span style="left:331.8px;top:646.7px;font-size:10px;transform:translate(-50%,-50%) rotate(-90deg);">Temperature (K)</span>
<span style="top:511px;font-size:10px;color:#000;left:767.8px;transform:translateX(-50%);">Gamma Count</span>
<span style="top:523px;font-size:10px;color:#000;right:242.5px;">60000</span>
<span style="top:544px;font-size:10px;color:#000;right:242.5px;">55000</span>
<span style="top:564px;font-size:10px;color:#000;right:242.5px;">50000</span>
<span style="top:585px;font-size:10px;color:#000;right:242.5px;">45000</span>
<span style="top:605px;font-size:10px;color:#000;right:242.5px;">40000</span>
<span style="top:626px;font-size:10px;color:#000;right:242.5px;">35000</span>
<span style="top:647px;font-size:10px;color:#000;right:242.5px;">30000</span>
<span style="top:667px;font-size:10px;color:#000;right:242.5px;">25000</span>
<span style="top:688px;font-size:10px;color:#000;right:242.5px;">20000</span>
<span style="top:708px;font-size:10px;color:#000;right:242.5px;">15000</span>
<span style="top:729px;font-size:10px;color:#000;right:242.5px;">10000</span>
<span style="top:749px;font-size:10px;color:#000;right:242.5px;">5000</span>
<span style="top:770px;font-size:10px;color:#000;right:242.5px;">0</span>
<span style="top:783px;font-size:10px;color:#000;left:668.0px;transform:translateX(-50%);">00:00</span>
<span style="top:783px;font-size:10px;color:#000;left:720.0px;transform:translateX(-50%);">02:00</span>
<span style="top:783px;font-size:10px;color:#000;left:772.0px;transform:translateX(-50%);">04:00</span>
<span style="top:783px;font-size:10px;color:#000;left:824.0px;transform:translateX(-50%);">06:00</span>
<span style="top:783px;font-size:10px;color:#000;left:864.0px;transform:translateX(-50%);">07:36</span>
<span style="top:798px;font-size:10px;color:#000;left:766px;transform:translateX(-50%);">Time</span>
<span style="left:621.8px;top:648.3px;font-size:10px;transform:translate(-50%,-50%) rotate(-90deg);">Counts/sec</span>
<svg width="901" height="844" viewBox="0 0 901 844" style="position:absolute;left:0;top:0"><rect x="86.8" y="526.0" width="193.6" height="243.79999999999998" fill="#000"/><line x1="81.7" y1="527.6" x2="86.2" y2="527.6" stroke="#222" stroke-width="1.1"/><line x1="81.7" y1="562.0857142857143" x2="86.2" y2="562.0857142857143" stroke="#222" stroke-width="1.1"/><line x1="81.7" y1="596.5714285714286" x2="86.2" y2="596.5714285714286" stroke="#222" stroke-width="1.1"/><line x1="81.7" y1="631.0571428571428" x2="86.2" y2="631.0571428571428" stroke="#222" stroke-width="1.1"/><line x1="81.7" y1="665.5428571428572" x2="86.2" y2="665.5428571428572" stroke="#222" stroke-width="1.1"/><line x1="81.7" y1="700.0285714285715" x2="86.2" y2="700.0285714285715" stroke="#222" stroke-width="1.1"/><line x1="81.7" y1="734.5142857142857" x2="86.2" y2="734.5142857142857" stroke="#222" stroke-width="1.1"/><line x1="81.7" y1="769.0" x2="86.2" y2="769.0" stroke="#222" stroke-width="1.1"/><line x1="87.8" y1="770.2" x2="87.8" y2="775.0" stroke="#222" stroke-width="1.1"/><line x1="138.32631578947368" y1="770.2" x2="138.32631578947368" y2="775.0" stroke="#222" stroke-width="1.1"/><line x1="188.85263157894735" y1="770.2" x2="188.85263157894735" y2="775.0" stroke="#222" stroke-width="1.1"/><line x1="239.37894736842105" y1="770.2" x2="239.37894736842105" y2="775.0" stroke="#222" stroke-width="1.1"/><line x1="279.79999999999995" y1="770.2" x2="279.79999999999995" y2="775.0" stroke="#222" stroke-width="1.1"/><path d="M87.8,551.70 H279.8 M87.8,545.63 H279.8 M87.8,541.32 H279.8 M87.8,537.98 H279.8 M87.8,535.25 H279.8 M87.8,532.94 H279.8 M87.8,530.94 H279.8 M87.8,529.18 H279.8 M87.8,586.19 H279.8 M87.8,580.12 H279.8 M87.8,575.81 H279.8 M87.8,572.47 H279.8 M87.8,569.74 H279.8 M87.8,567.43 H279.8 M87.8,565.43 H279.8 M87.8,563.66 H279.8 M87.8,620.68 H279.8 M87.8,614.60 H279.8 M87.8,610.29 H279.8 M87.8,606.95 H279.8 M87.8,604.22 H279.8 M87.8,601.91 H279.8 M87.8,599.91 H279.8 M87.8,598.15 H279.8 M87.8,655.16 H279.8 M87.8,649.09 H279.8 M87.8,644.78 H279.8 M87.8,641.44 H279.8 M87.8,638.71 H279.8 M87.8,636.40 H279.8 M87.8,634.40 H279.8 M87.8,632.64 H279.8 M87.8,689.65 H279.8 M87.8,683.57 H279.8 M87.8,679.27 H279.8 M87.8,675.92 H279.8 M87.8,673.19 H279.8 M87.8,670.88 H279.8 M87.8,668.88 H279.8 M87.8,667.12 H279.8 M87.8,724.13 H279.8 M87.8,718.06 H279.8 M87.8,713.75 H279.8 M87.8,710.41 H279.8 M87.8,707.68 H279.8 M87.8,705.37 H279.8 M87.8,703.37 H279.8 M87.8,701.61 H279.8 M87.8,758.62 H279.8 M87.8,752.55 H279.8 M87.8,748.24 H279.8 M87.8,744.90 H279.8 M87.8,742.16 H279.8 M87.8,739.86 H279.8 M87.8,737.86 H279.8 M87.8,736.09 H279.8 " stroke="#3e3e00" stroke-width="1.1" fill="none"/><path d="M94.12,527.6 V769.0 M100.43,527.6 V769.0 M106.75,527.6 V769.0 M113.06,527.6 V769.0 M119.38,527.6 V769.0 M125.69,527.6 V769.0 M132.01,527.6 V769.0 M144.64,527.6 V769.0 M150.96,527.6 V769.0 M157.27,527.6 V769.0 M163.59,527.6 V769.0 M169.91,527.6 V769.0 M176.22,527.6 V769.0 M182.54,527.6 V769.0 M195.17,527.6 V769.0 M201.48,527.6 V769.0 M207.80,527.6 V769.0 M214.12,527.6 V769.0 M220.43,527.6 V769.0 M226.75,527.6 V769.0 M233.06,527.6 V769.0 M245.69,527.6 V769.0 M252.01,527.6 V769.0 M258.33,527.6 V769.0 M264.64,527.6 V769.0 M270.96,527.6 V769.0 M277.27,527.6 V769.0 " stroke="#3e3e00" stroke-width="1.1" fill="none"/><path d="M138.33,527.6 V769.0 M188.85,527.6 V769.0 M239.38,527.6 V769.0 " stroke="#747400" stroke-width="1.1" fill="none"/><path d="M279.3,527.6 V769.0" stroke="#585800" stroke-width="1" fill="none"/><path d="M87.8,562.09 H279.8 M87.8,596.57 H279.8 M87.8,631.06 H279.8 M87.8,665.54 H279.8 M87.8,700.03 H279.8 M87.8,734.51 H279.8 M87.8,769.00 H279.8 " stroke="#767600" stroke-width="1.2" fill="none"/><line x1="123.9" y1="572" x2="123.9" y2="769" stroke="#5a82ff" stroke-width="2.0"/><line x1="234.4" y1="572" x2="234.4" y2="769" stroke="#5a82ff" stroke-width="1.4"/><line x1="274.3" y1="572" x2="274.3" y2="769" stroke="#5a82ff" stroke-width="1.4"/><line x1="130.3" y1="588" x2="130.3" y2="769" stroke="#40ff40" stroke-width="1.3"/><line x1="172.3" y1="588" x2="172.3" y2="769" stroke="#40ff40" stroke-width="1.3"/><line x1="185.6" y1="588" x2="185.6" y2="769" stroke="#40ff40" stroke-width="1.3"/><line x1="242.4" y1="588" x2="242.4" y2="769" stroke="#40ff40" stroke-width="1.3"/><line x1="240.9" y1="588" x2="240.9" y2="769" stroke="#40ff40" stroke-width="1.3"/><line x1="130.8" y1="565" x2="130.8" y2="769" stroke="#e0e060" stroke-width="1.1"/><line x1="233" y1="565" x2="233" y2="769" stroke="#e0e060" stroke-width="1.1"/><line x1="242.9" y1="565" x2="242.9" y2="769" stroke="#e0e060" stroke-width="1.1"/><line x1="121.2" y1="579" x2="121.2" y2="746" stroke="#f01848" stroke-width="1.5"/><circle cx="121.2" cy="579.3" r="2.1" fill="#ff0040"/><line x1="134.2" y1="579" x2="134.2" y2="746" stroke="#f01848" stroke-width="1.5"/><circle cx="134.2" cy="579.3" r="2.1" fill="#ff0040"/><line x1="171" y1="579" x2="171" y2="746" stroke="#f01848" stroke-width="1.5"/><circle cx="171" cy="579.3" r="2.1" fill="#ff0040"/><line x1="180.3" y1="579" x2="180.3" y2="746" stroke="#f01848" stroke-width="1.5"/><circle cx="180.3" cy="579.3" r="2.1" fill="#ff0040"/><line x1="239.3" y1="579" x2="239.3" y2="746" stroke="#f01848" stroke-width="1.5"/><circle cx="239.3" cy="579.3" r="2.1" fill="#ff0040"/><rect x="87.8" y="561.8" width="192.0" height="5.2" fill="#ffff60"/><rect x="87.8" y="569.4" width="192.0" height="4.8" fill="#5a82ff"/><circle cx="265.5" cy="571" r="2.6" fill="#5a82ff"/><rect x="87.8" y="584.2" width="192.0" height="8.2" fill="#40ff40"/><path d="M160,591.5 h2 v-2.5 h1.2 v2.5 z M203,584.2 h6 v0.8 h-6 z M215,584.2 h12 v0.8 h-12z" fill="#000"/><path d="M87.8,742.6 H121 L122.5,739 L124,741 L125,744 L132,742 L133.5,737.5 L135.5,737.5 L137,741.5 H204 L205,739.5 L207.5,739.5 L208.5,741.5 H228 L229,744.5 H234 L235,741.5 L242,741 L243.5,738.5 L246,738.5 L247.5,741.5 L254,741.5 L255,738.5 L258.5,739.5 L260,741.5 H279.8 V750.4 H124 V747.4 H87.8 Z" fill="#ff0040"/><circle cx="133.8" cy="735" r="2.6" fill="#ff0040"/><line x1="102.3" y1="533.3" x2="102.3" y2="562" stroke="#ffff60" stroke-width="1.3"/><circle cx="102.3" cy="533.3" r="2.1" fill="#ffff60"/><circle cx="102.3" cy="553.5" r="2.1" fill="#ffff60"/><circle cx="102.3" cy="561" r="2.1" fill="#ffff60"/><line x1="236.6" y1="542.8" x2="236.6" y2="562" stroke="#ffff60" stroke-width="1.3"/><circle cx="236.6" cy="542.8" r="2.1" fill="#ffff60"/><circle cx="236.6" cy="558.5" r="2.1" fill="#ffff60"/><rect x="362.9" y="525.6999999999999" width="208.30000000000004" height="244.4" fill="#000"/><line x1="357.4" y1="527.3" x2="361.8" y2="527.3" stroke="#222" stroke-width="1.1"/><line x1="357.4" y1="557.55" x2="361.8" y2="557.55" stroke="#222" stroke-width="1.1"/><line x1="357.4" y1="587.8" x2="361.8" y2="587.8" stroke="#222" stroke-width="1.1"/><line x1="357.4" y1="618.05" x2="361.8" y2="618.05" stroke="#222" stroke-width="1.1"/><line x1="357.4" y1="648.3" x2="361.8" y2="648.3" stroke="#222" stroke-width="1.1"/><line x1="357.4" y1="678.55" x2="361.8" y2="678.55" stroke="#222" stroke-width="1.1"/><line x1="357.4" y1="708.8" x2="361.8" y2="708.8" stroke="#222" stroke-width="1.1"/><line x1="357.4" y1="739.05" x2="361.8" y2="739.05" stroke="#222" stroke-width="1.1"/><line x1="357.4" y1="769.3" x2="361.8" y2="769.3" stroke="#222" stroke-width="1.1"/><line x1="363.9" y1="770.5" x2="363.9" y2="775.3" stroke="#222" stroke-width="1.1"/><line x1="418.29473684210524" y1="770.5" x2="418.29473684210524" y2="775.3" stroke="#222" stroke-width="1.1"/><line x1="472.6894736842105" y1="770.5" x2="472.6894736842105" y2="775.3" stroke="#222" stroke-width="1.1"/><line x1="527.0842105263158" y1="770.5" x2="527.0842105263158" y2="775.3" stroke="#222" stroke-width="1.1"/><line x1="570.6" y1="770.5" x2="570.6" y2="775.3" stroke="#222" stroke-width="1.1"/><path d="M363.9,533.35 H570.6 M363.9,539.40 H570.6 M363.9,545.45 H570.6 M363.9,551.50 H570.6 M363.9,563.60 H570.6 M363.9,569.65 H570.6 M363.9,575.70 H570.6 M363.9,581.75 H570.6 M363.9,593.85 H570.6 M363.9,599.90 H570.6 M363.9,605.95 H570.6 M363.9,612.00 H570.6 M363.9,624.10 H570.6 M363.9,630.15 H570.6 M363.9,636.20 H570.6 M363.9,642.25 H570.6 M363.9,654.35 H570.6 M363.9,660.40 H570.6 M363.9,666.45 H570.6 M363.9,672.50 H570.6 M363.9,684.60 H570.6 M363.9,690.65 H570.6 M363.9,696.70 H570.6 M363.9,702.75 H570.6 M363.9,714.85 H570.6 M363.9,720.90 H570.6 M363.9,726.95 H570.6 M363.9,733.00 H570.6 M363.9,745.10 H570.6 M363.9,751.15 H570.6 M363.9,757.20 H570.6 M363.9,763.25 H570.6 " stroke="#3a3a00" stroke-width="1.1" fill="none"/><path d="M370.70,527.3 V769.3 M377.50,527.3 V769.3 M384.30,527.3 V769.3 M391.10,527.3 V769.3 M397.90,527.3 V769.3 M404.70,527.3 V769.3 M411.50,527.3 V769.3 M425.09,527.3 V769.3 M431.89,527.3 V769.3 M438.69,527.3 V769.3 M445.49,527.3 V769.3 M452.29,527.3 V769.3 M459.09,527.3 V769.3 M465.89,527.3 V769.3 M479.49,527.3 V769.3 M486.29,527.3 V769.3 M493.09,527.3 V769.3 M499.89,527.3 V769.3 M506.69,527.3 V769.3 M513.49,527.3 V769.3 M520.28,527.3 V769.3 M533.88,527.3 V769.3 M540.68,527.3 V769.3 M547.48,527.3 V769.3 M554.28,527.3 V769.3 M561.08,527.3 V769.3 M567.88,527.3 V769.3 " stroke="#3a3a00" stroke-width="1.1" fill="none"/><path d="M418.29,527.3 V769.3 M472.69,527.3 V769.3 M527.08,527.3 V769.3 " stroke="#6c6c00" stroke-width="1.1" fill="none"/><path d="M570.1,527.3 V769.3" stroke="#505000" stroke-width="1" fill="none"/><path d="M363.9,557.55 H570.6 M363.9,587.80 H570.6 M363.9,618.05 H570.6 M363.9,648.30 H570.6 M363.9,678.55 H570.6 M363.9,708.80 H570.6 M363.9,739.05 H570.6 M363.9,769.30 H570.6 " stroke="#6c6c00" stroke-width="1.2" fill="none"/><path d="M363.9,680.0 V697.0 M364.8,680.7 V696.9 M365.7,680.1 V697.0 M366.6,679.7 V696.9 M367.5,680.3 V697.3 M368.4,679.5 V696.6 M369.3,679.5 V697.3 M370.2,680.4 V696.3 M371.1,680.8 V697.6 M372.0,680.3 V697.1 M372.9,679.6 V696.2 M373.8,680.1 V696.3 M374.7,679.7 V696.5 M375.6,679.4 V696.8 M376.5,680.0 V697.4 M377.4,680.1 V697.1 M378.3,680.1 V697.1 M379.2,680.0 V696.6 M380.1,680.8 V697.6 M381.0,680.6 V697.2 M381.9,679.8 V696.5 M382.8,679.8 V696.3 M383.7,680.5 V696.8 M384.6,680.6 V696.7 M385.5,680.7 V697.4 M386.4,679.4 V696.5 M387.3,680.7 V696.9 M388.2,680.8 V696.8 M389.1,679.5 V697.1 M390.0,680.5 V696.6 M390.9,679.5 V696.7 M391.8,680.7 V697.3 M392.7,679.6 V696.5 M393.6,679.5 V696.3 M394.5,680.5 V696.4 M395.4,680.2 V696.8 M396.3,679.7 V697.2 M397.2,679.6 V697.1 M398.1,679.6 V696.8 M399.0,679.7 V696.6 M399.9,680.8 V697.3 M400.8,679.8 V697.4 M401.7,679.7 V696.8 M402.6,680.6 V697.1 M403.5,679.5 V697.6 M404.4,679.7 V696.6 M405.3,680.5 V696.7 M406.2,679.8 V696.3 M407.1,679.5 V697.0 M408.0,679.7 V697.0 M408.9,679.9 V696.8 M409.8,680.7 V696.9 M410.7,664.3 V705.7 M411.6,645.2 V721.9 M412.5,633.2 V724.6 M413.4,636.2 V731.5 M414.3,623.5 V726.2 M415.2,624.1 V729.7 M416.1,623.7 V730.7 M417.0,628.3 V727.4 M417.9,636.7 V734.1 M418.8,626.8 V733.4 M419.7,629.0 V732.2 M420.6,639.0 V728.1 M421.5,624.6 V733.8 M422.4,632.0 V724.6 M423.3,628.2 V729.9 M424.2,624.9 V733.6 M425.1,633.3 V732.2 M426.0,627.1 V733.5 M426.9,628.0 V732.5 M427.8,631.5 V739.5 M428.7,625.8 V737.1 M429.6,633.9 V741.5 M430.5,629.1 V734.4 M431.4,626.5 V738.3 M432.3,634.0 V739.3 M433.2,628.0 V741.9 M434.1,628.0 V740.9 M435.0,630.5 V730.7 M435.9,628.5 V737.8 M436.8,639.5 V740.0 M437.7,628.9 V740.8 M438.6,636.3 V733.7 M439.5,632.3 V747.3 M440.4,635.3 V746.9 M441.3,643.5 V747.5 M442.2,640.7 V746.0 M443.1,631.4 V734.0 M444.0,633.2 V742.1 M444.9,630.8 V742.2 M445.8,636.3 V736.8 M446.7,637.5 V742.0 M447.6,631.3 V739.8 M448.5,632.6 V741.2 M449.4,637.0 V735.4 M450.3,643.2 V743.0 M451.2,632.6 V740.5 M452.1,634.6 V739.1 M453.0,644.9 V740.7 M453.9,640.2 V734.8 M454.8,634.2 V733.1 M455.7,637.7 V735.6 M456.6,643.8 V741.8 M457.5,638.7 V734.9 M458.4,643.6 V741.5 M459.3,637.1 V732.9 M460.2,640.7 V732.7 M461.1,653.3 V731.8 M462.0,650.5 V727.2 M462.9,649.7 V732.3 M463.8,642.1 V739.0 M464.7,635.3 V735.0 M465.6,632.8 V747.8 M466.5,630.1 V753.0 M467.4,626.1 V747.6 M468.3,630.2 V763.7 M469.2,636.5 V751.9 M470.1,621.2 V765.5 M471.0,623.7 V768.0 M471.9,630.9 V766.1 M472.8,612.6 V761.9 M473.7,615.8 V753.5 M474.6,617.1 V753.4 M475.5,624.8 V752.3 M476.4,626.8 V752.4 M477.3,629.7 V746.0 M478.2,635.5 V746.6 M479.1,638.0 V743.3 M480.0,633.1 V728.8 M480.9,639.9 V732.0 M481.8,661.4 V719.0 M482.7,671.9 V702.3 M483.6,677.0 V700.3 M484.5,679.8 V697.4 M485.4,679.1 V698.3 M486.3,679.1 V698.2 M487.2,678.7 V697.3 M488.1,678.5 V697.3 M489.0,679.2 V697.9 M489.9,679.2 V697.4 M490.8,678.7 V697.5 M491.7,679.6 V698.6 M492.6,679.7 V697.3 M493.5,678.5 V698.5 M494.4,679.0 V698.3 M495.3,678.9 V697.9 M496.2,679.1 V697.8 M497.1,679.2 V697.2 M498.0,679.4 V698.4 M498.9,678.7 V697.8 M499.8,679.4 V697.8 M500.7,678.7 V697.4 M501.6,677.0 V699.6 M502.5,676.6 V701.6 M503.4,673.3 V705.8 M504.3,675.2 V704.7 M505.2,672.9 V706.0 M506.1,673.6 V706.0 M507.0,673.2 V708.5 M507.9,671.7 V707.7 M508.8,673.5 V706.3 M509.7,675.9 V704.1 M510.6,677.7 V699.7 M511.5,679.8 V698.1 M512.4,679.4 V698.3 M513.3,679.8 V697.2 M514.2,679.3 V698.2 M515.1,678.8 V697.8 M516.0,678.5 V697.5 M516.9,678.9 V697.3 M517.8,678.8 V698.5 M518.7,679.2 V697.9 M519.6,679.8 V698.0 M520.5,679.8 V698.1 M521.4,679.5 V697.3 M522.3,679.2 V698.3 M523.2,678.5 V698.5 M524.1,678.6 V697.9 M525.0,678.6 V697.9 M525.9,679.3 V697.3 M526.8,680.1 V698.8 M527.7,680.0 V700.2 M528.6,679.6 V699.4 M529.5,679.6 V698.6 M530.4,678.8 V698.2 M531.3,678.8 V697.2 M532.2,678.7 V697.3 M533.1,678.6 V698.3 M534.0,678.9 V698.5 M534.9,679.4 V697.3 M535.8,679.8 V698.5 M536.7,677.1 V698.5 M537.6,675.8 V697.9 M538.5,676.1 V697.9 M539.4,676.1 V699.4 M540.3,676.9 V699.4 M541.2,677.6 V700.7 M542.1,664.6 V715.1 M543.0,652.6 V729.8 M543.9,637.7 V747.0 M544.8,633.4 V754.0 M545.7,629.9 V754.3 M546.6,628.6 V745.7 M547.5,625.5 V744.4 M548.4,627.9 V746.7 M549.3,633.2 V734.9 M550.2,623.2 V740.1 M551.1,635.0 V735.1 M552.0,643.5 V724.2 M552.9,655.4 V717.6 M553.8,666.9 V711.1 M554.7,674.9 V708.6 M555.6,675.0 V707.4 M556.5,675.3 V707.6 M557.4,674.9 V704.1 M558.3,674.4 V708.1 M559.2,674.0 V708.2 M560.1,674.6 V706.0 M561.0,675.0 V708.2 M561.9,674.8 V708.3 M562.8,674.9 V706.1 M563.7,674.1 V707.8 M564.6,674.4 V708.4 M565.5,674.7 V704.4 M566.4,675.4 V707.3 M567.3,675.0 V707.1 M568.2,676.4 V703.3 M569.1,676.1 V705.6 M570.0,676.6 V704.8 " stroke="#ff0040" stroke-width="1.8" fill="none"/><path d="M491,655 V743" stroke="#ff0040" stroke-width="1.2"/><path d="M441.3,745 V754" stroke="#ff0040" stroke-width="1.2"/><path d="M544.6,750 V762" stroke="#ff0040" stroke-width="1.2"/><path d="M549.6,735 V745" stroke="#ff0040" stroke-width="1.2"/><g fill="#ff0040"><circle cx="410.7" cy="665.5" r="2"/><circle cx="410.7" cy="704.5" r="2"/><circle cx="411.6" cy="646.4" r="2"/><circle cx="411.6" cy="720.7" r="2"/><circle cx="412.5" cy="634.4" r="2"/><circle cx="413.4" cy="637.4" r="2"/><circle cx="413.4" cy="730.3" r="2"/><circle cx="414.3" cy="624.7" r="2"/><circle cx="415.2" cy="728.5" r="2"/><circle cx="416.1" cy="624.9" r="2"/><circle cx="416.1" cy="729.5" r="2"/><circle cx="417.0" cy="726.2" r="2"/><circle cx="417.9" cy="637.9" r="2"/><circle cx="417.9" cy="732.9" r="2"/><circle cx="418.8" cy="628.0" r="2"/><circle cx="418.8" cy="732.2" r="2"/><circle cx="419.7" cy="630.2" r="2"/><circle cx="421.5" cy="625.8" r="2"/><circle cx="422.4" cy="633.2" r="2"/><circle cx="423.3" cy="629.4" r="2"/><circle cx="430.5" cy="630.3" r="2"/><circle cx="431.4" cy="627.7" r="2"/><circle cx="431.4" cy="737.1" r="2"/><circle cx="433.2" cy="629.2" r="2"/><circle cx="435.0" cy="631.7" r="2"/><circle cx="436.8" cy="738.8" r="2"/><circle cx="438.6" cy="637.5" r="2"/><circle cx="438.6" cy="732.5" r="2"/><circle cx="439.5" cy="633.5" r="2"/><circle cx="439.5" cy="746.1" r="2"/><circle cx="440.4" cy="636.5" r="2"/><circle cx="441.3" cy="644.7" r="2"/><circle cx="441.3" cy="746.3" r="2"/><circle cx="443.1" cy="632.6" r="2"/><circle cx="443.1" cy="732.8" r="2"/><circle cx="444.0" cy="740.9" r="2"/><circle cx="444.9" cy="741.0" r="2"/><circle cx="446.7" cy="638.7" r="2"/><circle cx="446.7" cy="740.8" r="2"/><circle cx="447.6" cy="738.6" r="2"/><circle cx="449.4" cy="638.2" r="2"/><circle cx="453.0" cy="739.5" r="2"/><circle cx="455.7" cy="638.9" r="2"/><circle cx="456.6" cy="645.0" r="2"/><circle cx="456.6" cy="740.6" r="2"/><circle cx="457.5" cy="639.9" r="2"/><circle cx="457.5" cy="733.7" r="2"/><circle cx="458.4" cy="740.3" r="2"/><circle cx="459.3" cy="638.3" r="2"/><circle cx="459.3" cy="731.7" r="2"/><circle cx="461.1" cy="730.6" r="2"/><circle cx="462.0" cy="651.7" r="2"/><circle cx="467.4" cy="746.4" r="2"/><circle cx="468.3" cy="762.5" r="2"/><circle cx="469.2" cy="637.7" r="2"/><circle cx="469.2" cy="750.7" r="2"/><circle cx="471.0" cy="624.9" r="2"/><circle cx="471.9" cy="764.9" r="2"/><circle cx="472.8" cy="760.7" r="2"/><circle cx="473.7" cy="617.0" r="2"/><circle cx="474.6" cy="618.3" r="2"/><circle cx="474.6" cy="752.2" r="2"/><circle cx="475.5" cy="626.0" r="2"/><circle cx="475.5" cy="751.1" r="2"/><circle cx="476.4" cy="628.0" r="2"/><circle cx="479.1" cy="639.2" r="2"/><circle cx="480.0" cy="727.6" r="2"/><circle cx="480.9" cy="641.1" r="2"/><circle cx="480.9" cy="730.8" r="2"/><circle cx="481.8" cy="717.8" r="2"/><circle cx="482.7" cy="673.1" r="2"/><circle cx="482.7" cy="701.1" r="2"/><circle cx="504.3" cy="676.4" r="2"/><circle cx="505.2" cy="704.8" r="2"/><circle cx="507.0" cy="707.3" r="2"/><circle cx="507.9" cy="672.9" r="2"/><circle cx="507.9" cy="706.5" r="2"/><circle cx="508.8" cy="674.7" r="2"/><circle cx="541.2" cy="699.5" r="2"/><circle cx="542.1" cy="665.8" r="2"/><circle cx="542.1" cy="713.9" r="2"/><circle cx="543.0" cy="653.8" r="2"/><circle cx="543.9" cy="745.8" r="2"/><circle cx="545.7" cy="631.1" r="2"/><circle cx="546.6" cy="629.8" r="2"/><circle cx="546.6" cy="744.5" r="2"/><circle cx="548.4" cy="629.1" r="2"/><circle cx="549.3" cy="634.4" r="2"/><circle cx="549.3" cy="733.7" r="2"/><circle cx="550.2" cy="738.9" r="2"/><circle cx="551.1" cy="636.2" r="2"/><circle cx="552.0" cy="644.7" r="2"/><circle cx="552.0" cy="723.0" r="2"/><circle cx="554.7" cy="676.1" r="2"/><circle cx="554.7" cy="707.4" r="2"/><circle cx="557.4" cy="702.9" r="2"/><circle cx="560.1" cy="704.8" r="2"/><circle cx="561.0" cy="707.0" r="2"/><circle cx="561.9" cy="707.1" r="2"/><circle cx="562.8" cy="704.9" r="2"/><circle cx="567.3" cy="705.9" r="2"/><circle cx="568.2" cy="702.1" r="2"/><circle cx="569.1" cy="704.4" r="2"/><circle cx="570.0" cy="703.6" r="2"/><circle cx="491.1" cy="655.0" r="2"/><circle cx="491.0" cy="662.3" r="2"/><circle cx="491.1" cy="669.7" r="2"/><circle cx="491.2" cy="674.8" r="2"/><circle cx="490.8" cy="682.4" r="2"/><circle cx="491.0" cy="687.0" r="2"/><circle cx="491.1" cy="693.4" r="2"/><circle cx="491.1" cy="701.3" r="2"/><circle cx="490.7" cy="708.6" r="2"/><circle cx="491.2" cy="715.0" r="2"/><circle cx="490.7" cy="719.8" r="2"/><circle cx="491.3" cy="726.9" r="2"/><circle cx="491.1" cy="731.7" r="2"/><circle cx="491.2" cy="736.7" r="2"/><circle cx="491.0" cy="743.0" r="2"/><circle cx="441.1" cy="745.0" r="2"/><circle cx="441.5" cy="750.3" r="2"/><circle cx="441.3" cy="754.0" r="2"/><circle cx="544.8" cy="750.0" r="2"/><circle cx="544.5" cy="755.9" r="2"/><circle cx="544.6" cy="762.0" r="2"/><circle cx="549.7" cy="735.0" r="2"/><circle cx="549.6" cy="741.2" r="2"/><circle cx="549.6" cy="745.0" r="2"/></g><path d="M363.9,583.7 V592.9 M364.8,583.6 V591.7 M365.7,583.2 V592.2 M366.6,583.1 V591.8 M367.5,582.7 V592.2 M368.4,582.7 V592.2 M369.3,582.4 V591.7 M370.2,583.4 V592.2 M371.1,583.1 V592.6 M372.0,582.9 V591.7 M372.9,583.5 V592.4 M373.8,583.3 V592.5 M374.7,583.8 V592.1 M375.6,583.5 V592.1 M376.5,583.2 V592.5 M377.4,582.8 V591.7 M378.3,583.1 V592.6 M379.2,583.2 V592.2 M380.1,583.3 V591.9 M381.0,582.6 V592.1 M381.9,583.5 V591.9 M382.8,582.6 V591.7 M383.7,582.5 V592.0 M384.6,583.2 V592.7 M385.5,582.9 V592.1 M386.4,582.8 V592.0 M387.3,583.5 V592.4 M388.2,582.8 V591.7 M389.1,583.5 V592.6 M390.0,583.6 V591.9 M390.9,583.2 V592.9 M391.8,583.2 V592.9 M392.7,582.6 V593.0 M393.6,582.5 V592.2 M394.5,582.4 V592.7 M395.4,583.4 V593.0 M396.3,583.5 V592.9 M397.2,583.2 V593.0 M398.1,583.4 V592.1 M399.0,583.8 V592.1 M399.9,582.7 V591.7 M400.8,583.1 V591.9 M401.7,583.7 V592.9 M402.6,582.7 V591.7 M403.5,583.1 V591.8 M404.4,583.2 V592.7 M405.3,582.8 V592.2 M406.2,583.7 V592.2 M407.1,582.9 V592.8 M408.0,583.5 V592.9 M408.9,583.4 V592.2 M409.8,583.4 V592.8 M410.7,569.5 V603.6 M411.6,551.5 V617.8 M412.5,541.3 V620.6 M413.4,549.5 V623.9 M414.3,545.9 V622.2 M415.2,544.4 V623.2 M416.1,539.9 V619.6 M417.0,544.4 V621.8 M417.9,545.8 V626.3 M418.8,548.8 V624.0 M419.7,544.6 V619.4 M420.6,551.5 V625.0 M421.5,547.4 V626.9 M422.4,544.3 V619.2 M423.3,545.1 V621.9 M424.2,543.8 V627.9 M425.1,543.8 V621.9 M426.0,545.4 V629.0 M426.9,551.1 V628.7 M427.8,553.6 V625.5 M428.7,544.1 V628.3 M429.6,543.4 V624.3 M430.5,544.3 V629.9 M431.4,543.7 V620.4 M432.3,543.5 V626.4 M433.2,545.9 V625.3 M434.1,550.8 V626.8 M435.0,543.9 V630.6 M435.9,545.7 V629.8 M436.8,551.6 V629.0 M437.7,549.7 V622.3 M438.6,554.1 V621.2 M439.5,550.3 V624.2 M440.4,549.6 V625.5 M441.3,545.9 V631.4 M442.2,551.3 V627.8 M443.1,545.3 V626.7 M444.0,551.4 V627.9 M444.9,548.5 V629.4 M445.8,554.5 V626.7 M446.7,551.9 V629.6 M447.6,544.6 V629.6 M448.5,549.9 V626.5 M449.4,548.5 V631.1 M450.3,547.9 V630.9 M451.2,545.2 V626.8 M452.1,550.8 V627.2 M453.0,546.4 V621.0 M453.9,547.8 V627.6 M454.8,554.9 V630.5 M455.7,553.9 V630.1 M456.6,550.3 V630.1 M457.5,546.0 V623.2 M458.4,554.8 V622.7 M459.3,557.2 V621.6 M460.2,563.9 V611.7 M461.1,569.4 V612.5 M462.0,572.2 V608.0 M462.9,571.5 V611.1 M463.8,563.3 V612.2 M464.7,553.5 V617.4 M465.6,547.5 V623.9 M466.5,539.3 V634.0 M467.4,544.7 V631.6 M468.3,534.1 V629.5 M469.2,538.3 V627.0 M470.1,536.4 V625.2 M471.0,540.0 V620.7 M471.9,539.3 V621.9 M472.8,528.6 V623.8 M473.7,533.9 V617.2 M474.6,534.4 V624.8 M475.5,537.1 V623.5 M476.4,544.2 V617.8 M477.3,543.7 V624.5 M478.2,548.6 V627.4 M479.1,554.4 V622.8 M480.0,552.1 V620.5 M480.9,561.5 V611.9 M481.8,569.5 V603.1 M482.7,579.9 V596.7 M483.6,583.0 V592.4 M484.5,583.0 V593.3 M485.4,582.9 V593.6 M486.3,583.3 V593.2 M487.2,583.3 V592.6 M488.1,582.4 V593.1 M489.0,582.7 V593.8 M489.9,582.9 V593.3 M490.8,582.9 V593.8 M491.7,582.6 V593.6 M492.6,582.8 V593.1 M493.5,582.5 V592.8 M494.4,582.0 V593.1 M495.3,582.4 V592.8 M496.2,582.1 V593.7 M497.1,579.9 V596.4 M498.0,578.5 V597.2 M498.9,578.3 V595.8 M499.8,579.2 V595.6 M500.7,581.0 V594.7 M501.6,582.5 V593.1 M502.5,580.5 V594.8 M503.4,578.4 V597.5 M504.3,576.4 V601.0 M505.2,575.2 V602.4 M506.1,574.9 V602.8 M507.0,575.8 V601.6 M507.9,576.4 V599.8 M508.8,578.0 V598.7 M509.7,579.1 V596.0 M510.6,581.5 V594.3 M511.5,582.2 V592.3 M512.4,582.2 V592.4 M513.3,582.6 V593.4 M514.2,582.5 V592.3 M515.1,582.9 V592.7 M516.0,582.8 V593.2 M516.9,582.6 V593.2 M517.8,582.9 V593.4 M518.7,583.1 V593.5 M519.6,583.0 V592.6 M520.5,582.7 V593.3 M521.4,583.1 V593.2 M522.3,583.2 V593.4 M523.2,582.8 V593.1 M524.1,582.1 V593.1 M525.0,583.2 V596.0 M525.9,583.6 V597.6 M526.8,582.6 V596.4 M527.7,583.0 V593.2 M528.6,582.0 V593.4 M529.5,582.6 V592.3 M530.4,583.1 V592.9 M531.3,582.7 V593.2 M532.2,581.8 V592.7 M533.1,581.6 V592.8 M534.0,581.9 V593.0 M534.9,581.3 V592.2 M535.8,581.6 V591.9 M536.7,581.5 V593.2 M537.6,580.5 V592.1 M538.5,577.9 V592.1 M539.4,576.1 V593.0 M540.3,577.1 V593.0 M541.2,577.7 V593.7 M542.1,578.4 V595.9 M543.0,567.5 V602.0 M543.9,558.1 V609.1 M544.8,549.1 V610.5 M545.7,549.3 V613.4 M546.6,548.2 V615.1 M547.5,537.8 V615.7 M548.4,543.2 V614.4 M549.3,539.0 V616.3 M550.2,528.6 V614.3 M551.1,536.5 V614.7 M552.0,550.0 V610.5 M552.9,566.9 V606.7 M553.8,574.9 V605.6 M554.7,577.6 V602.7 M555.6,577.9 V603.2 M556.5,577.7 V604.7 M557.4,578.0 V605.1 M558.3,577.3 V603.9 M559.2,578.1 V605.2 M560.1,577.6 V605.2 M561.0,577.1 V605.1 M561.9,577.1 V604.4 M562.8,577.3 V601.8 M563.7,577.3 V601.5 M564.6,578.3 V603.6 M565.5,578.7 V603.0 M566.4,578.1 V600.1 M567.3,578.2 V599.4 M568.2,579.7 V602.1 M569.1,579.0 V601.2 M570.0,579.2 V599.9 " stroke="#10fbbb" stroke-width="1.8" fill="none"/><path d="M491,561 V628" stroke="#10fbbb" stroke-width="1.2"/><path d="M466.2,628 V652" stroke="#10fbbb" stroke-width="1.2"/><path d="M545.2,610 V640" stroke="#10fbbb" stroke-width="1.2"/><path d="M551.6,610 V636" stroke="#10fbbb" stroke-width="1.2"/><g fill="#10fbbb"><circle cx="410.7" cy="570.7" r="2"/><circle cx="410.7" cy="602.4" r="2"/><circle cx="412.5" cy="542.5" r="2"/><circle cx="413.4" cy="622.7" r="2"/><circle cx="414.3" cy="547.1" r="2"/><circle cx="415.2" cy="622.0" r="2"/><circle cx="416.1" cy="541.1" r="2"/><circle cx="417.0" cy="545.6" r="2"/><circle cx="417.0" cy="620.6" r="2"/><circle cx="417.9" cy="625.1" r="2"/><circle cx="419.7" cy="545.8" r="2"/><circle cx="421.5" cy="548.6" r="2"/><circle cx="421.5" cy="625.7" r="2"/><circle cx="422.4" cy="545.5" r="2"/><circle cx="422.4" cy="618.0" r="2"/><circle cx="423.3" cy="546.3" r="2"/><circle cx="424.2" cy="545.0" r="2"/><circle cx="424.2" cy="626.7" r="2"/><circle cx="425.1" cy="620.7" r="2"/><circle cx="426.0" cy="627.8" r="2"/><circle cx="426.9" cy="627.5" r="2"/><circle cx="427.8" cy="554.8" r="2"/><circle cx="428.7" cy="545.3" r="2"/><circle cx="429.6" cy="544.6" r="2"/><circle cx="431.4" cy="619.2" r="2"/><circle cx="432.3" cy="544.7" r="2"/><circle cx="434.1" cy="625.6" r="2"/><circle cx="435.0" cy="629.4" r="2"/><circle cx="436.8" cy="552.8" r="2"/><circle cx="437.7" cy="550.9" r="2"/><circle cx="438.6" cy="555.3" r="2"/><circle cx="438.6" cy="620.0" r="2"/><circle cx="439.5" cy="551.5" r="2"/><circle cx="439.5" cy="623.0" r="2"/><circle cx="440.4" cy="624.3" r="2"/><circle cx="441.3" cy="547.1" r="2"/><circle cx="441.3" cy="630.2" r="2"/><circle cx="442.2" cy="552.5" r="2"/><circle cx="442.2" cy="626.6" r="2"/><circle cx="443.1" cy="546.5" r="2"/><circle cx="443.1" cy="625.5" r="2"/><circle cx="445.8" cy="555.7" r="2"/><circle cx="445.8" cy="625.5" r="2"/><circle cx="446.7" cy="553.1" r="2"/><circle cx="446.7" cy="628.4" r="2"/><circle cx="448.5" cy="551.1" r="2"/><circle cx="448.5" cy="625.3" r="2"/><circle cx="450.3" cy="549.1" r="2"/><circle cx="450.3" cy="629.7" r="2"/><circle cx="451.2" cy="546.4" r="2"/><circle cx="452.1" cy="626.0" r="2"/><circle cx="453.0" cy="547.6" r="2"/><circle cx="453.0" cy="619.8" r="2"/><circle cx="453.9" cy="626.4" r="2"/><circle cx="457.5" cy="547.2" r="2"/><circle cx="457.5" cy="622.0" r="2"/><circle cx="460.2" cy="565.1" r="2"/><circle cx="461.1" cy="611.3" r="2"/><circle cx="462.0" cy="606.8" r="2"/><circle cx="464.7" cy="554.7" r="2"/><circle cx="465.6" cy="548.7" r="2"/><circle cx="471.0" cy="541.2" r="2"/><circle cx="472.8" cy="529.8" r="2"/><circle cx="472.8" cy="622.6" r="2"/><circle cx="473.7" cy="616.0" r="2"/><circle cx="474.6" cy="623.6" r="2"/><circle cx="475.5" cy="538.3" r="2"/><circle cx="475.5" cy="622.3" r="2"/><circle cx="478.2" cy="626.2" r="2"/><circle cx="479.1" cy="621.6" r="2"/><circle cx="480.0" cy="553.3" r="2"/><circle cx="480.9" cy="562.7" r="2"/><circle cx="481.8" cy="601.9" r="2"/><circle cx="543.0" cy="568.7" r="2"/><circle cx="543.9" cy="559.3" r="2"/><circle cx="544.8" cy="550.3" r="2"/><circle cx="544.8" cy="609.3" r="2"/><circle cx="545.7" cy="612.2" r="2"/><circle cx="546.6" cy="549.4" r="2"/><circle cx="546.6" cy="613.9" r="2"/><circle cx="547.5" cy="539.0" r="2"/><circle cx="547.5" cy="614.5" r="2"/><circle cx="548.4" cy="544.4" r="2"/><circle cx="549.3" cy="540.2" r="2"/><circle cx="551.1" cy="537.7" r="2"/><circle cx="554.7" cy="601.5" r="2"/><circle cx="555.6" cy="602.0" r="2"/><circle cx="556.5" cy="603.5" r="2"/><circle cx="559.2" cy="604.0" r="2"/><circle cx="560.1" cy="604.0" r="2"/><circle cx="561.9" cy="603.2" r="2"/><circle cx="563.7" cy="600.3" r="2"/><circle cx="565.5" cy="601.8" r="2"/><circle cx="491.0" cy="561.0" r="2"/><circle cx="490.8" cy="566.3" r="2"/><circle cx="491.0" cy="572.1" r="2"/><circle cx="491.1" cy="579.8" r="2"/><circle cx="491.2" cy="586.2" r="2"/><circle cx="491.2" cy="591.4" r="2"/><circle cx="491.3" cy="598.6" r="2"/><circle cx="491.0" cy="604.6" r="2"/><circle cx="491.0" cy="609.4" r="2"/><circle cx="491.4" cy="616.1" r="2"/><circle cx="490.9" cy="623.8" r="2"/><circle cx="491.0" cy="628.0" r="2"/><circle cx="466.5" cy="628.0" r="2"/><circle cx="466.3" cy="635.9" r="2"/><circle cx="466.5" cy="641.5" r="2"/><circle cx="466.3" cy="646.1" r="2"/><circle cx="466.2" cy="652.0" r="2"/><circle cx="545.5" cy="610.0" r="2"/><circle cx="545.0" cy="616.7" r="2"/><circle cx="544.8" cy="621.8" r="2"/><circle cx="545.4" cy="628.9" r="2"/><circle cx="545.0" cy="634.7" r="2"/><circle cx="545.2" cy="640.0" r="2"/><circle cx="551.4" cy="610.0" r="2"/><circle cx="551.5" cy="616.3" r="2"/><circle cx="551.8" cy="622.0" r="2"/><circle cx="551.5" cy="627.3" r="2"/><circle cx="552.0" cy="633.8" r="2"/><circle cx="551.6" cy="636.0" r="2"/></g><path d="M465.5,634.3 V740.1 M466.4,633.0 V739.4 M467.3,637.5 V750.8 M468.2,626.3 V762.1 M469.1,621.9 V767.2 M470.0,630.5 V768.5 M470.9,626.4 V769.6 M471.8,617.2 V765.9 M472.7,613.9 V746.6 M473.6,614.0 V745.1 M474.5,630.3 V756.5 M475.4,620.2 V755.5 M476.3,622.3 V746.0 M477.2,633.7 V747.0 M478.1,631.8 V747.7 M479.0,633.6 V735.3 M479.9,633.6 V737.6 M480.8,638.9 V727.7 " stroke="#ff0040" stroke-width="1.8" fill="none"/><path d="M473,611 V625" stroke="#ff0040" stroke-width="1.2"/><g fill="#ff0040"><circle cx="466.4" cy="634.2" r="2"/><circle cx="466.4" cy="738.2" r="2"/><circle cx="467.3" cy="749.6" r="2"/><circle cx="469.1" cy="623.1" r="2"/><circle cx="470.0" cy="767.3" r="2"/><circle cx="470.9" cy="627.6" r="2"/><circle cx="474.5" cy="631.5" r="2"/><circle cx="474.5" cy="755.3" r="2"/><circle cx="475.4" cy="621.4" r="2"/><circle cx="476.3" cy="623.5" r="2"/><circle cx="476.3" cy="744.8" r="2"/><circle cx="477.2" cy="634.9" r="2"/><circle cx="477.2" cy="745.8" r="2"/><circle cx="478.1" cy="746.5" r="2"/><circle cx="479.0" cy="634.8" r="2"/><circle cx="479.9" cy="634.8" r="2"/><circle cx="479.9" cy="736.4" r="2"/><circle cx="480.8" cy="640.1" r="2"/><circle cx="473.3" cy="611.0" r="2"/><circle cx="472.9" cy="618.8" r="2"/><circle cx="473.0" cy="624.5" r="2"/><circle cx="473.0" cy="625.0" r="2"/></g><circle cx="415" cy="623.5" r="2" fill="#ff0040"/><circle cx="418.5" cy="624.5" r="2" fill="#ff0040"/><circle cx="421.5" cy="626" r="2" fill="#ff0040"/><circle cx="548" cy="617" r="2" fill="#ff0040"/><circle cx="549.5" cy="628" r="2" fill="#ff0040"/><circle cx="546" cy="622" r="2" fill="#ff0040"/><rect x="667" y="525.6999999999999" width="199.20000000000002" height="249.10000000000005" fill="#000"/><line x1="660.3" y1="527.3" x2="666" y2="527.3" stroke="#222" stroke-width="1.1"/><line x1="660.3" y1="547.8583333333333" x2="666" y2="547.8583333333333" stroke="#222" stroke-width="1.1"/><line x1="660.3" y1="568.4166666666666" x2="666" y2="568.4166666666666" stroke="#222" stroke-width="1.1"/><line x1="660.3" y1="588.9749999999999" x2="666" y2="588.9749999999999" stroke="#222" stroke-width="1.1"/><line x1="660.3" y1="609.5333333333333" x2="666" y2="609.5333333333333" stroke="#222" stroke-width="1.1"/><line x1="660.3" y1="630.0916666666667" x2="666" y2="630.0916666666667" stroke="#222" stroke-width="1.1"/><line x1="660.3" y1="650.65" x2="666" y2="650.65" stroke="#222" stroke-width="1.1"/><line x1="660.3" y1="671.2083333333333" x2="666" y2="671.2083333333333" stroke="#222" stroke-width="1.1"/><line x1="660.3" y1="691.7666666666667" x2="666" y2="691.7666666666667" stroke="#222" stroke-width="1.1"/><line x1="660.3" y1="712.325" x2="666" y2="712.325" stroke="#222" stroke-width="1.1"/><line x1="660.3" y1="732.8833333333333" x2="666" y2="732.8833333333333" stroke="#222" stroke-width="1.1"/><line x1="660.3" y1="753.4416666666666" x2="666" y2="753.4416666666666" stroke="#222" stroke-width="1.1"/><line x1="660.3" y1="774.0" x2="666" y2="774.0" stroke="#222" stroke-width="1.1"/><line x1="668.0" y1="775.2" x2="668.0" y2="780" stroke="#222" stroke-width="1.1"/><line x1="720.0" y1="775.2" x2="720.0" y2="780" stroke="#222" stroke-width="1.1"/><line x1="772.0" y1="775.2" x2="772.0" y2="780" stroke="#222" stroke-width="1.1"/><line x1="824.0" y1="775.2" x2="824.0" y2="780" stroke="#222" stroke-width="1.1"/><line x1="865.6" y1="775.2" x2="865.6" y2="780" stroke="#222" stroke-width="1.1"/><path d="M668,537.58 H865.6 M668,558.14 H865.6 M668,578.70 H865.6 M668,599.25 H865.6 M668,619.81 H865.6 M668,640.37 H865.6 M668,660.93 H865.6 M668,681.49 H865.6 M668,702.05 H865.6 M668,722.60 H865.6 M668,743.16 H865.6 M668,763.72 H865.6 " stroke="#444400" stroke-width="1.1" fill="none"/><path d="M668,547.86 H865.6 M668,588.97 H865.6 M668,630.09 H865.6 M668,671.21 H865.6 M668,712.33 H865.6 M668,753.44 H865.6 " stroke="#606000" stroke-width="1.1" fill="none"/><path d="M674.50,527.3 V774 M681.00,527.3 V774 M687.50,527.3 V774 M694.00,527.3 V774 M700.50,527.3 V774 M707.00,527.3 V774 M713.50,527.3 V774 M726.50,527.3 V774 M733.00,527.3 V774 M739.50,527.3 V774 M746.00,527.3 V774 M752.50,527.3 V774 M759.00,527.3 V774 M765.50,527.3 V774 M778.50,527.3 V774 M785.00,527.3 V774 M791.50,527.3 V774 M798.00,527.3 V774 M804.50,527.3 V774 M811.00,527.3 V774 M817.50,527.3 V774 M830.50,527.3 V774 M837.00,527.3 V774 M843.50,527.3 V774 M850.00,527.3 V774 M856.50,527.3 V774 M863.00,527.3 V774 " stroke="#444400" stroke-width="1.1" fill="none"/><path d="M720.00,527.3 V774 M772.00,527.3 V774 M824.00,527.3 V774 " stroke="#868600" stroke-width="1.1" fill="none"/><path d="M865.1,527.3 V774" stroke="#606000" stroke-width="1" fill="none"/><path d="M668,568.42 H865.6 M668,609.53 H865.6 M668,650.65 H865.6 M668,691.77 H865.6 M668,732.88 H865.6 M668,774.00 H865.6 " stroke="#868600" stroke-width="1.2" fill="none"/><path d="M668.2,527.3 V774" stroke="#ff0040" stroke-width="1.8"/><rect x="667.4" y="771.8" width="198.40000000000003" height="3.2" fill="#ff0040"/></svg>
<div style="left:12.5px;top:819.6px;width:52px;height:20px;background:#c0c0c0;box-sizing:border-box;border:2.4px solid;border-color:#b6a88a #f0e4cc #f0e4cc #b6a88a;"></div>
<div style="left:14.9px;top:822px;width:47.2px;height:15px;background:#dcdcdc;"></div>
<span style="top:825px;font-size:13.2px;color:#000;left:17px;">3453</span>
<span style="top:821px;font-size:10px;color:#000;left:66px;">Cycle time [ms]</span>
<div style="left:173.5px;top:818.4px;width:190.7px;height:22px;background:#d2d2d2;box-sizing:border-box;border:2px solid;border-color:#f6f6f6 #6a6a6a #6a6a6a #f6f6f6;"></div>
<span style="top:825px;font-size:18.85px;color:#f20000;font-weight:700;-webkit-text-stroke:0;left:191.4px;">STOP PROGRAM</span>
<div style="left:402.6px;top:814.9px;width:217.3px;height:24px;background:#b8a68a;"></div>
<div style="left:404.2px;top:816.6px;width:214.2px;height:24px;background:#80f46c;"></div>
<span style="top:821px;font-size:20.5px;color:#000;left:510.4px;transform:translateX(-50%);">System OK</span>
<span style="top:828px;font-size:10px;color:#000;left:658.3px;">Last moderator grown</span>
<div style="left:762.7px;top:822px;width:120px;height:18px;background:#c0c0c0;box-sizing:border-box;border:2.2px solid;border-color:#b6a88a #f0e4cc #f0e4cc #b6a88a;"></div>
<div style="left:764.9px;top:824px;width:115px;height:14px;background:#dedede;"></div>
<span style="top:828px;font-size:10px;color:#000;left:766.7px;">Tue 08 Nov 2022 18:37</span>
<div style="left:-6px;top:835px;width:913px;height:15px;background:#d5d1c9;"></div>
<div style="left:-6px;top:835px;width:913px;height:1.3px;background:#f4f4f0;"></div>
<div style="left:-6px;top:836.3px;width:913px;height:1.2px;background:#e6e4de;"></div>
<div style="left:0px;top:835px;width:901px;height:0.8px;background:#d0d0cc;"></div>
<div style="left:65px;top:835.3px;width:182px;height:14.7px;background:#f4f4f0;background-image:repeating-conic-gradient(#ffffff 0% 25%, #dcdcd4 0% 50%);background-size:2px 2px;"></div>
<div style="left:247px;top:835px;width:1.4px;height:15px;background:#f4f4f0;"></div>
<div style="left:248.4px;top:836.3px;width:1.2px;height:14px;background:#e6e4de;"></div>
<div style="left:-6px;top:835px;width:57.3px;height:15px;background:#ffffff;box-sizing:border-box;border-right:1.2px solid #202020;border-top:1.2px solid #404040;"></div>
<span style="top:837px;font-size:9.8px;color:#000;right:853.6px;">My Computer</span>
<div style="left:51.3px;top:835.6px;width:13.7px;height:14.4px;background:#e4e4e0;"></div>
<div style="left:64.8px;top:836px;width:1.1px;height:14px;background:#303030;"></div>
<svg width="901" height="844" viewBox="0 0 901 844" style="position:absolute;left:0;top:0"><path d="M60.5,838.8 V845.6 L56.6,842.2 Z" fill="#101010"/></svg>
</div></div></body></html>
